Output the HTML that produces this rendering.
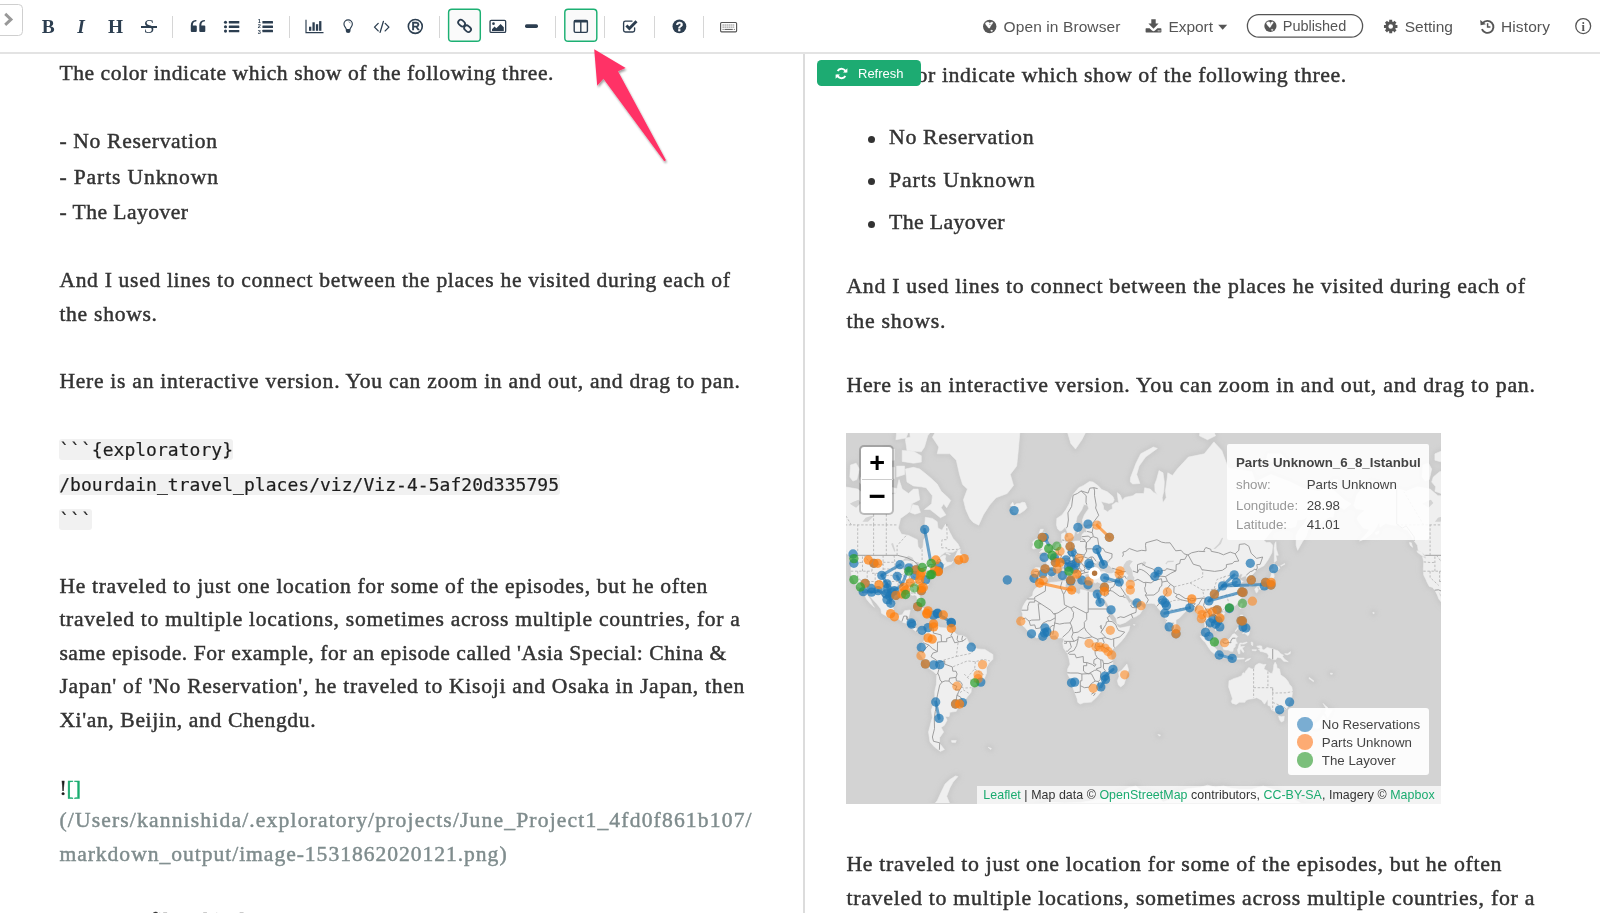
<!DOCTYPE html>
<html lang="en">
<head>
<meta charset="utf-8">
<title>Note editor – split view</title>
<style>
html,body{margin:0;padding:0;}
body{will-change:transform;width:1600px;height:913px;overflow:hidden;background:#fff;position:relative;font-family:"Liberation Sans",sans-serif;color:#333;}
.abs{position:absolute;}
.ic{position:absolute;overflow:visible;}
/* toolbar */
#toolbar{position:absolute;left:0;top:0;width:1600px;height:52px;background:#fff;border-bottom:2px solid #e3e3e3;box-sizing:content-box;}
.tb-letter{position:absolute;font-family:"Liberation Serif",serif;font-weight:bold;font-size:19.4px;line-height:20px;color:#2c3e50;white-space:nowrap;}
.sep{position:absolute;top:16px;height:21.5px;width:0;border-left:1.4px solid #d6d6d6;}
.actbtn{position:absolute;box-sizing:border-box;border:1.8px solid #1cb073;border-radius:4.5px;background:#fafafa;}
.rt{position:absolute;font-size:15px;line-height:18px;color:#555;white-space:nowrap;}
#toggle{position:absolute;left:-6px;top:3.5px;width:28.5px;height:32.5px;box-sizing:border-box;border:1px solid #cfcfcf;border-radius:4.5px;background:#fff;}
/* panes */
#vdiv{position:absolute;left:802.5px;top:54px;width:2.2px;height:859px;background:#dcdcdc;}
.ln{position:absolute;white-space:nowrap;font-family:"Liberation Serif",serif;color:#333;-webkit-text-stroke:0.45px #333;}
.L{font-size:21.6px;line-height:30px;}
.R{font-size:21.85px;line-height:30px;}
.code{position:absolute;white-space:nowrap;font-family:"DejaVu Sans Mono","Liberation Mono",monospace;font-size:18px;line-height:21px;color:#1d1d1d;-webkit-text-stroke:0.2px #1d1d1d;background:#f1f1f1;border-radius:3px;height:20.6px;letter-spacing:0.03px;}
.url{color:#7f8c8d;-webkit-text-stroke:0.45px #7f8c8d;}
.grn{color:#1aab6f;-webkit-text-stroke:0.45px #1aab6f;}
.blk{color:#1a1a1a;}
#refresh{position:absolute;left:817px;top:60px;width:104px;height:25.6px;background:#1dab72;border-radius:4.5px;color:#fff;font-size:13px;line-height:25.6px;}
.bullet{position:absolute;width:7px;height:7px;border-radius:50%;background:#333;}
/* map */
#mapwrap{position:absolute;left:846px;top:433px;width:594.8px;height:370.6px;overflow:hidden;background:#d3d3d3;}
svg.map{position:absolute;left:0;top:0;display:block;}
#zoomctl{position:absolute;left:13px;top:12px;width:35px;height:69.5px;box-sizing:border-box;border:2px solid rgba(0,0,0,0.22);border-radius:5px;background:#fff;background-clip:padding-box;}
#zoomctl div{position:absolute;left:0.7px;width:31px;text-align:center;font-family:"Liberation Sans",sans-serif;font-weight:bold;color:#000;}
#tip{position:absolute;left:381px;top:11px;width:202.3px;height:96px;background:rgba(255,255,255,0.88);border-radius:2px;font-size:13.3px;color:#444;}
#tip div{position:absolute;white-space:nowrap;line-height:16px;}
#legend{position:absolute;left:442.2px;top:274.8px;width:141px;height:67.6px;background:rgba(255,255,255,0.92);border-radius:3px;font-size:13.3px;color:#444;}
#legend i{position:absolute;left:9px;width:15.6px;height:15.6px;border-radius:50%;}
#legend span{position:absolute;left:33.6px;white-space:nowrap;line-height:16px;}
#attr{position:absolute;left:131px;top:353.2px;width:464px;height:17.6px;background:rgba(255,255,255,0.72);font-size:12.4px;line-height:17.5px;color:#333;white-space:nowrap;}
#attr a{color:#1aab6f;text-decoration:none;}
#arrow{position:absolute;left:560px;top:30px;overflow:visible;}
</style>
</head>
<body>

<div id="toolbar">
<div id="toggle"></div>
<svg class="ic" style="left:0;top:0" width="30" height="40" viewBox="0 0 30 40" fill="none" stroke="#999" stroke-width="2.9" stroke-linejoin="miter"><path d="M5.2 13.9 L11 19.4 L5.2 24.9"/></svg>
<div class="tb-letter" id="tB" style="left:41.8px;top:16.7px">B</div>
<div class="tb-letter" id="tI" style="left:77.2px;top:16.7px;font-style:italic">I</div>
<div class="tb-letter" id="tH" style="left:108px;top:16.7px">H</div>
<div class="tb-letter" id="tS" style="left:143.8px;top:16.7px;font-weight:normal">S</div>
<div class="abs" style="left:141.2px;top:26.2px;width:15.8px;height:1.5px;background:#2c3e50"></div>
<div class="sep" style="left:172.3px"></div>
<div class="sep" style="left:289px"></div>
<div class="sep" style="left:438.8px"></div>
<div class="sep" style="left:554.8px"></div>
<div class="sep" style="left:604.4px"></div>
<div class="sep" style="left:653.8px"></div>
<div class="sep" style="left:702.9px"></div>
<svg class="ic" style="left:440px;top:0" width="170" height="52" viewBox="440 0 170 52"><rect x="448.6" y="9.2" width="31.7" height="32" rx="3.3" fill="#fafafa" stroke="#1cb073" stroke-width="1.45"/><rect x="564.8" y="9.2" width="32" height="32" rx="3.3" fill="#fafafa" stroke="#1cb073" stroke-width="1.45"/></svg>
<svg class="ic" style="left:0;top:0" width="800" height="52" viewBox="0 0 800 52" fill="#2c3e50" stroke="none">
<path transform="translate(190.8 19.9)" d="M0 11.2 V5.6 C0 2.2 1.8 0.2 4.9 0 Q5.8 0 5.8 0.85 Q5.8 1.6 4.9 1.7 C3 1.9 2.1 3 2 5.6 H5 Q6 5.6 6 6.6 V11.2 Q6 12.2 5 12.2 H1 Q0 12.2 0 11.2 Z"/>
<path transform="translate(199.3 19.9)" d="M0 11.2 V5.6 C0 2.2 1.8 0.2 4.9 0 Q5.8 0 5.8 0.85 Q5.8 1.6 4.9 1.7 C3 1.9 2.1 3 2 5.6 H5 Q6 5.6 6 6.6 V11.2 Q6 12.2 5 12.2 H1 Q0 12.2 0 11.2 Z"/>
<circle cx="225.5" cy="22.3" r="1.55"/><rect x="228.8" y="21.1" width="10.5" height="2.4" rx="0.5"/>
<circle cx="225.5" cy="26.7" r="1.55"/><rect x="228.8" y="25.5" width="10.5" height="2.4" rx="0.5"/>
<circle cx="225.5" cy="31.1" r="1.55"/><rect x="228.8" y="29.900000000000002" width="10.5" height="2.4" rx="0.5"/>
<rect x="262.4" y="21.05" width="10.6" height="2.5" rx="0.5"/>
<rect x="262.4" y="25.45" width="10.6" height="2.5" rx="0.5"/>
<rect x="262.4" y="29.85" width="10.6" height="2.5" rx="0.5"/>
<g font-family="Liberation Sans, sans-serif" font-weight="bold" font-size="5.6px" text-anchor="middle"><text x="259.2" y="23">1</text><text x="259.2" y="28.3">2</text><text x="259.2" y="33.8">3</text></g>
<path d="M306 19.8 V32.55 H323.5" fill="none" stroke="#2c3e50" stroke-width="1.15"/>
<rect x="309.0" y="26.7" width="2.3" height="4.1"/>
<rect x="312.45" y="22.3" width="2.3" height="8.5"/>
<rect x="315.9" y="24.2" width="2.3" height="6.6"/>
<rect x="319.1" y="21.1" width="2.3" height="9.7"/>
<path d="M346.3 29.2 C346.1 27.6 343.95 26.7 343.95 24.1 A4.2 4.2 0 0 1 352.35 24.1 C352.35 26.7 350.2 27.6 350 29.2" fill="none" stroke="#2c3e50" stroke-width="1.15"/>
<path d="M345.8 28.9 H350.5 V30.9 Q350.5 32.7 348.15 32.95 Q345.8 32.7 345.8 30.9 Z"/>
<path d="M348.6 21.7 Q350 22 350.3 23.3" fill="none" stroke="#2c3e50" stroke-width="0.55"/>
<g fill="none" stroke="#2c3e50" stroke-width="1.35" stroke-linecap="round" stroke-linejoin="round"><path d="M378.2 23.4 L374.5 27.15 L378.2 30.9"/><path d="M383.4 21.4 L380.1 32.4"/><path d="M385.2 23.4 L388.9 27.15 L385.2 30.9"/></g>
<circle cx="415.3" cy="26.4" r="6.95" fill="none" stroke="#2c3e50" stroke-width="1.6"/>
<text x="415.6" y="30.4" font-family="Liberation Sans, sans-serif" font-weight="bold" font-size="11.4px" text-anchor="middle" stroke="#2c3e50" stroke-width="0.3">R</text>
<g fill="none" stroke="#2c3e50" stroke-width="1.75"><rect x="-3.7" y="-2.6" width="7.4" height="5.2" rx="2.6" transform="translate(461.6 23.1) rotate(42)"/><rect x="-3.7" y="-2.6" width="7.4" height="5.2" rx="2.6" transform="translate(467.6 28.7) rotate(42)"/></g>
<rect x="490.05" y="20.4" width="15.6" height="12" rx="1.2" fill="none" stroke="#2c3e50" stroke-width="1.3"/>
<circle cx="493.5" cy="23.7" r="1.35"/><path d="M492 31 V29.2 L494.6 26.6 L496.3 28.3 L500.6 23.9 L503.8 27.2 V31 Z"/>
<rect x="525" y="24.3" width="13" height="3.6" rx="1.6"/>
<rect x="574.2" y="20.5" width="13.2" height="11.9" rx="1.3" fill="none" stroke="#2c3e50" stroke-width="1.4"/><rect x="574" y="19.9" width="13.6" height="2.6" rx="1"/><rect x="580.1" y="21" width="1.4" height="11.5"/>
<path d="M634.6 27.8 V30.2 Q634.6 32 632.8 32 H625.4 Q623.6 32 623.6 30.2 V22.9 Q623.6 21.1 625.4 21.1 H632" fill="none" stroke="#2c3e50" stroke-width="1.35" stroke-linecap="round"/>
<path d="M626.4 25.5 L629.4 28.5 L636.5 21.2" fill="none" stroke="#2c3e50" stroke-width="2.9" stroke-linejoin="miter"/>
<circle cx="679.4" cy="26.45" r="6.9"/>
<text x="679.4" y="30.9" font-family="Liberation Sans, sans-serif" font-weight="bold" font-size="12.3px" text-anchor="middle" fill="#fff" stroke="#fff" stroke-width="0.3">?</text>
<g fill="none" stroke="#555"><rect x="720.6" y="22.5" width="16" height="9.3" rx="1" stroke-width="1.15"/><path d="M722.6 25 H734.8 M722.6 27.1 H734.8" stroke-width="1" stroke-dasharray="1.1 0.9"/><path d="M724.5 29.4 H732.8" stroke-width="1"/><path d="M722.6 29.4 H723.6 M733.8 29.4 H734.8" stroke-width="1"/></g>
</svg>
<svg class="ic" style="left:960px;top:0" width="640" height="52" viewBox="960 0 640 52" fill="#555" stroke="none">
<circle cx="989.7" cy="26.5" r="6.7"/><path d="M985.23 23.25 L986.45 22.13 L988.18 21.93 L989.19 22.54 L989.90 23.25 L990.72 22.44 L992.03 21.93 L992.95 22.54 L992.34 23.86 L991.32 25.08 L990.51 26.30 L989.90 27.72 L989.09 28.33 L988.18 27.72 L987.47 26.70 L986.45 25.59 L985.74 24.47Z M990.72 30.26 L991.93 30.05 L992.85 30.76 L991.93 31.58 L990.92 31.27Z" fill="#fff" stroke="#fff" stroke-width="0.3" stroke-linejoin="round"/><circle cx="989.90" cy="24.17" r="0.51"/>
<path d="M1151.3 19.2 H1155.7 V23.6 H1158.6 L1153.5 28.7 L1148.4 23.6 H1151.3 Z"/>
<path d="M1146.2 28.3 H1149.6 L1152 30.6 Q1153.5 31.8 1155 30.6 L1157.4 28.3 H1160.8 Q1161.4 28.3 1161.4 28.9 V31.8 Q1161.4 32.4 1160.8 32.4 H1146.2 Q1145.6 32.4 1145.6 31.8 V28.9 Q1145.6 28.3 1146.2 28.3 Z"/>
<circle cx="1158.2" cy="30.8" r="0.6" fill="#fff"/><circle cx="1159.9" cy="30.8" r="0.6" fill="#fff"/>
<path d="M1218.2 24.7 H1227.2 L1222.7 29.7 Z"/>
<rect x="1247.4" y="14.6" width="115.2" height="22.6" rx="11.3" fill="none" stroke="#555" stroke-width="1.3"/>
<circle cx="1270.4" cy="26.0" r="6.1"/><path d="M1266.33 23.04 L1267.44 22.03 L1269.01 21.84 L1269.94 22.40 L1270.58 23.04 L1271.32 22.30 L1272.53 21.84 L1273.36 22.40 L1272.80 23.60 L1271.88 24.71 L1271.14 25.82 L1270.58 27.11 L1269.85 27.66 L1269.01 27.11 L1268.37 26.18 L1267.44 25.17 L1266.80 24.15Z M1271.32 29.42 L1272.43 29.23 L1273.27 29.88 L1272.43 30.62 L1271.51 30.34Z" fill="#fff" stroke="#fff" stroke-width="0.3" stroke-linejoin="round"/><circle cx="1270.58" cy="23.87" r="0.46"/>
<path fill-rule="evenodd" d="M1397.43 25.04 L1397.43 28.06 L1395.69 28.00 L1395.26 29.06 L1396.53 30.25 L1394.40 32.38 L1393.21 31.11 L1392.15 31.54 L1392.21 33.28 L1389.19 33.28 L1389.25 31.54 L1388.19 31.11 L1387.00 32.38 L1384.87 30.25 L1386.14 29.06 L1385.71 28.00 L1383.97 28.06 L1383.97 25.04 L1385.71 25.10 L1386.14 24.04 L1384.87 22.85 L1387.00 20.72 L1388.19 21.99 L1389.25 21.56 L1389.19 19.82 L1392.21 19.82 L1392.15 21.56 L1393.21 21.99 L1394.40 20.72 L1396.53 22.85 L1395.26 24.04 L1395.69 25.10Z M1393.00 26.55 A2.3 2.3 0 1 0 1388.40 26.55 A2.3 2.3 0 1 0 1393.00 26.55Z"/>
<path d="M1482.7 23.2 A6 6 0 1 1 1481.9 29.2" fill="none" stroke="#555" stroke-width="1.9"/>
<path d="M1480.2 19.9 L1480.6 25.3 L1485.9 24.2 Z"/>
<path d="M1487.6 23.3 V27 H1490.4" fill="none" stroke="#555" stroke-width="1.5"/>
<circle cx="1583.2" cy="26.1" r="7.45" fill="none" stroke="#555" stroke-width="1.3"/>
<text x="1583.25" y="30.7" font-family="Liberation Serif, serif" font-weight="bold" font-size="12.5px" text-anchor="middle">i</text>
</svg>
<div id="r_open" class="rt" style="left:1003.6px;top:17.73px;font-size:15.5px;letter-spacing:0.096px">Open in Browser</div>
<div id="r_export" class="rt" style="left:1168.4px;top:17.73px;font-size:15.5px;letter-spacing:-0.043px">Export</div>
<div id="r_pub" class="rt" style="left:1282.8px;top:16.98px;font-size:14.5px;letter-spacing:-0.036px">Published</div>
<div id="r_set" class="rt" style="left:1404.7px;top:17.73px;font-size:15.5px;letter-spacing:0.006px">Setting</div>
<div id="r_hist" class="rt" style="left:1501px;top:17.73px;font-size:15.5px;letter-spacing:0.111px">History</div>
</div>
<div id="l1" class="ln L " style="left:59.4px;top:57.71px;letter-spacing:0.565px">The color indicate which show of the following three.</div>
<div id="l2" class="ln L " style="left:59.4px;top:125.71px;letter-spacing:0.671px">- No Reservation</div>
<div id="l3" class="ln L " style="left:59.4px;top:161.71px;letter-spacing:0.874px">- Parts Unknown</div>
<div id="l4" class="ln L " style="left:59.4px;top:197.21px;letter-spacing:0.456px">- The Layover</div>
<div id="l5" class="ln L " style="left:59.4px;top:265.11px;letter-spacing:0.670px">And I used lines to connect between the places he visited during each of</div>
<div id="l6" class="ln L " style="left:59.4px;top:299.11px;letter-spacing:0.712px">the shows.</div>
<div id="l7" class="ln L " style="left:59.4px;top:366.31px;letter-spacing:0.724px">Here is an interactive version. You can zoom in and out, and drag to pan.</div>
<div class="code" style="left:59.2px;top:439.4px;width:174.3px">```{exploratory}</div>
<div class="code" style="left:59.2px;top:474px;width:500.6px">/bourdain_travel_places/viz/Viz-4-5af20d335795</div>
<div class="code" style="left:59.2px;top:509px;width:32.6px">```</div>
<div id="l11" class="ln L " style="left:59.4px;top:570.71px;letter-spacing:0.673px">He traveled to just one location for some of the episodes, but he often</div>
<div id="l12" class="ln L " style="left:59.4px;top:604.11px;letter-spacing:0.722px">traveled to multiple locations, sometimes across multiple countries, for a</div>
<div id="l13" class="ln L " style="left:59.4px;top:637.71px;letter-spacing:0.555px">same episode. For example, for an episode called 'Asia Special: China &amp;</div>
<div id="l14" class="ln L " style="left:59.4px;top:671.11px;letter-spacing:0.730px">Japan' of 'No Reservation', he traveled to Kisoji and Osaka in Japan, then</div>
<div id="l15" class="ln L " style="left:59.4px;top:704.71px;letter-spacing:0.615px">Xi'an, Beijin, and Chengdu.</div>
<div id="l16" class="ln L " style="left:59.4px;top:772.71px;letter-spacing:0.003px"><span class="blk">!</span><span class="grn">[]</span></div>
<div id="l17" class="ln L url" style="left:59.4px;top:805.11px;letter-spacing:1.157px">(/Users/kannishida/.exploratory/projects/June_Project1_4fd0f861b107/</div>
<div id="l18" class="ln L url" style="left:59.4px;top:838.71px;letter-spacing:0.963px">markdown_output/image-1531862020121.png)</div>
<div id="l19" class="ln L " style="left:59.4px;top:905.21px;letter-spacing:0.000px">so we can filter this data.</div>
<div id="vdiv"></div>
<div id="r1" class="ln R " style="left:846.4px;top:59.63px;letter-spacing:0.573px">The color indicate which show of the following three.</div>
<div id="refresh"><svg class="ic" style="left:17.5px;top:6.6px" width="13" height="13" viewBox="0 0 13 13" fill="none" stroke="#fff" stroke-width="1.9"><path d="M10.9 5.2 A4.6 4.6 0 0 0 2.6 3.9"/><path d="M2.1 7.8 A4.6 4.6 0 0 0 10.4 9.1"/><path d="M12.4 1.2 V5.6 H8 Z" fill="#fff" stroke="none"/><path d="M0.6 11.8 V7.4 H5 Z" fill="#fff" stroke="none"/></svg><span id="rf_t" style="position:absolute;left:41px;top:0.8px;letter-spacing:0">Refresh</span></div>
<div class="bullet" style="left:868.1px;top:135.9px"></div>
<div class="bullet" style="left:868.1px;top:178.3px"></div>
<div class="bullet" style="left:868.1px;top:220.7px"></div>
<div id="r2" class="ln R " style="left:889px;top:122.23px;letter-spacing:0.623px">No Reservation</div>
<div id="r3" class="ln R " style="left:889px;top:164.63px;letter-spacing:0.857px">Parts Unknown</div>
<div id="r4" class="ln R " style="left:889px;top:207.03px;letter-spacing:0.340px">The Layover</div>
<div id="r5" class="ln R " style="left:846.4px;top:271.03px;letter-spacing:0.681px">And I used lines to connect between the places he visited during each of</div>
<div id="r6" class="ln R " style="left:846.4px;top:305.63px;letter-spacing:0.752px">the shows.</div>
<div id="r7" class="ln R " style="left:846.4px;top:369.63px;letter-spacing:0.734px">Here is an interactive version. You can zoom in and out, and drag to pan.</div>
<div id="mapwrap">
<svg class="map" viewBox="846 433 595 370" width="595" height="370">
<defs><filter id="halo" x="-5%" y="-5%" width="110%" height="110%"><feGaussianBlur stdDeviation="2.2"/></filter><clipPath id="mc"><rect x="846" y="433" width="595" height="370"/></clipPath></defs>
<rect x="846" y="433" width="595" height="370" fill="#d3d3d3"/>
<g clip-path="url(#mc)">
<defs><path id="landp" d="M781.4 505.8 L784.6 494.4 L790.9 486.8 L799.7 480.6 L810.0 484.5 L824.3 488.6 L833.9 491.3 L845.0 486.8 L857.7 489.1 L865.6 495.7 L876.8 495.7 L886.3 495.7 L895.9 493.5 L899.0 479.6 L902.2 489.1 L908.6 493.5 L913.4 489.1 L918.1 489.1 L919.7 499.8 L911.8 503.8 L910.2 511.4 L900.6 518.4 L898.2 528.1 L901.4 534.1 L908.6 535.5 L917.3 539.7 L918.1 546.5 L920.5 549.6 L922.9 547.8 L923.7 539.7 L926.9 535.5 L924.5 529.6 L925.3 517.3 L932.4 518.4 L937.2 521.7 L938.0 528.1 L942.0 530.2 L945.1 524.9 L945.9 524.0 L949.9 532.6 L953.1 538.4 L957.9 543.8 L959.9 547.8 L956.3 550.3 L953.1 552.3 L945.1 552.3 L942.0 554.5 L937.2 559.6 L943.6 555.3 L945.9 555.8 L945.1 558.9 L946.7 562.3 L951.5 562.3 L953.1 561.2 L951.5 563.9 L946.7 566.2 L943.6 567.9 L943.6 565.7 L945.9 563.5 L942.0 564.6 L937.2 567.5 L935.9 570.1 L937.2 571.8 L934.0 572.9 L930.8 574.1 L930.5 576.4 L928.5 578.5 L927.7 581.5 L928.5 584.8 L925.3 586.8 L922.9 588.7 L919.7 591.5 L919.2 594.9 L921.0 600.3 L921.0 603.3 L919.4 603.5 L917.3 599.4 L916.8 596.3 L914.9 594.9 L912.6 595.4 L909.4 594.3 L906.2 594.5 L906.5 596.5 L903.8 596.1 L899.0 595.6 L895.1 598.0 L893.8 602.1 L893.0 608.2 L895.1 613.3 L898.2 615.5 L902.2 614.8 L904.6 610.7 L910.2 609.9 L909.4 614.1 L908.1 619.1 L913.4 619.3 L916.1 620.8 L915.6 627.3 L917.3 630.0 L921.3 630.2 L925.3 631.0 L924.5 633.3 L921.3 633.3 L919.7 632.1 L916.5 631.7 L912.6 628.9 L909.4 624.1 L903.0 622.4 L898.2 618.8 L894.3 619.5 L887.9 617.0 L881.5 613.3 L880.8 609.0 L876.8 603.8 L872.8 599.4 L869.6 595.8 L866.1 591.7 L867.2 594.9 L870.4 599.4 L872.8 604.7 L874.4 607.3 L870.4 603.8 L866.4 599.0 L864.9 594.9 L862.5 590.2 L860.1 587.4 L856.9 586.4 L854.5 581.9 L853.7 579.9 L851.3 575.0 L850.9 569.0 L851.3 561.9 L850.2 556.7 L853.7 558.9 L852.9 555.3 L849.8 552.8 L845.8 550.3 L845.0 545.2 L841.8 541.1 L838.6 535.5 L835.4 530.2 L830.7 528.7 L825.9 525.6 L819.5 524.9 L813.2 523.3 L807.6 527.1 L806.8 521.7 L803.6 528.1 L798.9 534.1 L792.5 538.9 L786.9 541.1 L792.5 535.5 L797.3 529.6 L790.9 528.1 L786.1 521.7 L784.6 518.4 L786.9 514.9 L792.5 510.3 L789.3 509.5 L783.8 508.8Z M925.3 631.0 L928.5 627.8 L932.4 626.5 L934.8 625.0 L934.8 628.1 L937.2 626.0 L940.4 627.6 L946.7 628.1 L949.9 627.8 L953.1 631.3 L957.9 635.3 L962.6 635.7 L966.6 637.7 L969.0 643.3 L971.4 645.7 L977.7 648.9 L984.9 649.4 L989.7 652.5 L992.9 654.5 L992.9 659.3 L988.9 663.3 L986.5 667.4 L986.5 673.2 L984.1 679.1 L981.7 682.5 L977.0 683.9 L971.4 687.7 L971.1 692.2 L967.4 696.8 L963.4 702.4 L958.7 704.0 L955.8 702.4 L957.9 707.3 L956.3 711.3 L949.9 712.3 L949.1 716.5 L945.1 716.5 L947.1 720.1 L944.4 725.2 L941.2 727.5 L943.6 732.1 L939.6 737.7 L939.6 743.3 L944.4 749.5 L940.4 751.4 L934.8 747.3 L930.0 742.0 L928.5 732.1 L930.8 723.0 L932.4 717.5 L931.3 710.3 L933.2 704.4 L934.8 698.7 L934.8 691.3 L936.4 684.2 L936.7 674.5 L933.2 671.5 L927.7 667.4 L925.3 663.3 L922.1 656.9 L919.4 652.9 L920.8 649.7 L921.3 646.5 L921.3 644.1 L923.2 642.5 L925.3 638.5 L925.6 634.5 L924.5 633.3Z M1039.0 583.9 L1045.3 585.0 L1050.1 582.5 L1056.5 581.9 L1064.4 581.1 L1066.0 581.7 L1065.2 586.4 L1066.0 588.3 L1072.3 590.6 L1078.7 594.3 L1080.3 593.0 L1080.3 589.6 L1085.1 590.2 L1088.2 591.7 L1094.6 593.0 L1097.8 592.1 L1100.2 592.6 L1102.9 592.5 L1104.0 595.8 L1102.9 598.9 L1100.3 595.0 L1101.8 598.5 L1104.2 603.8 L1107.3 609.9 L1107.8 614.1 L1110.5 619.1 L1113.7 622.4 L1116.9 624.9 L1117.3 626.5 L1120.0 628.1 L1126.4 626.8 L1129.9 626.0 L1128.8 630.5 L1124.8 636.9 L1121.6 640.9 L1116.1 646.5 L1112.9 648.9 L1110.5 653.7 L1111.3 657.7 L1112.9 662.5 L1112.9 669.0 L1108.9 672.8 L1104.2 677.4 L1104.9 684.2 L1101.0 686.9 L1100.5 692.2 L1097.0 696.8 L1091.4 702.1 L1083.5 702.8 L1080.3 704.0 L1077.8 702.4 L1077.1 698.7 L1074.7 692.2 L1072.3 686.0 L1071.2 680.8 L1067.6 674.0 L1067.6 669.0 L1070.0 664.1 L1069.2 659.3 L1067.6 653.7 L1063.6 648.1 L1062.8 643.3 L1064.1 639.3 L1062.0 637.7 L1058.0 638.1 L1055.7 635.0 L1050.1 635.7 L1045.3 637.3 L1041.3 636.6 L1036.6 637.9 L1033.4 635.7 L1030.2 633.7 L1027.4 630.5 L1024.7 627.3 L1021.8 624.9 L1020.7 621.3 L1022.3 618.3 L1022.7 614.1 L1021.5 610.7 L1023.1 606.1 L1025.4 602.1 L1027.8 598.9 L1032.6 595.8 L1033.1 592.1 L1035.0 588.7 L1037.7 587.0Z M1039.8 583.5 L1041.3 582.1 L1045.3 581.9 L1047.7 578.9 L1048.5 577.5 L1048.0 576.4 L1050.1 573.3 L1053.6 571.2 L1053.4 568.6 L1055.7 568.2 L1058.8 568.8 L1060.4 567.3 L1062.8 565.9 L1064.9 567.9 L1066.0 570.3 L1068.4 572.3 L1070.8 573.7 L1073.5 575.4 L1073.9 578.5 L1073.5 579.5 L1074.7 579.1 L1075.8 577.5 L1074.7 576.0 L1075.5 574.4 L1077.9 575.4 L1077.1 573.9 L1073.9 571.6 L1072.3 571.2 L1070.0 567.7 L1068.1 566.2 L1068.1 563.9 L1070.3 563.3 L1070.1 564.6 L1072.3 565.7 L1073.9 567.9 L1076.3 569.0 L1078.7 571.2 L1079.5 573.3 L1079.3 574.8 L1081.1 577.5 L1082.2 578.9 L1083.0 581.9 L1084.3 582.5 L1085.1 580.9 L1086.7 580.1 L1085.1 577.5 L1085.1 574.8 L1086.7 574.1 L1089.8 573.7 L1090.2 575.2 L1091.4 574.1 L1094.6 573.3 L1090.2 576.4 L1091.1 578.5 L1091.9 581.5 L1093.3 582.1 L1095.4 583.1 L1097.3 581.9 L1100.2 583.3 L1102.6 582.7 L1105.7 581.9 L1105.4 584.5 L1105.6 586.4 L1104.5 589.3 L1103.7 591.5 L1102.9 592.5 L1104.0 595.8 L1104.2 598.5 L1106.5 602.1 L1108.9 606.4 L1110.5 609.9 L1112.9 614.1 L1116.1 618.3 L1117.2 623.7 L1120.0 624.4 L1125.6 622.4 L1131.2 618.3 L1136.0 616.6 L1139.9 614.1 L1143.6 608.2 L1141.5 606.1 L1138.3 604.7 L1138.0 601.7 L1136.3 603.3 L1134.4 605.2 L1130.5 605.0 L1130.4 602.1 L1129.3 603.8 L1128.0 601.2 L1126.1 598.5 L1124.8 595.2 L1126.1 594.3 L1128.8 595.8 L1130.4 598.9 L1134.4 600.8 L1138.3 600.3 L1139.9 602.6 L1146.3 603.5 L1151.1 603.3 L1154.6 603.8 L1156.6 606.1 L1158.2 608.5 L1160.6 611.1 L1163.0 610.7 L1164.3 614.1 L1165.4 619.1 L1167.4 624.1 L1169.3 628.9 L1171.7 632.0 L1172.8 630.5 L1174.6 628.4 L1176.0 624.1 L1176.0 619.9 L1179.4 618.0 L1183.7 613.6 L1186.8 610.2 L1189.2 609.4 L1192.4 608.5 L1194.5 608.5 L1195.6 611.6 L1198.4 615.0 L1198.8 619.1 L1201.1 618.3 L1203.5 618.3 L1204.6 623.2 L1205.1 628.9 L1204.8 632.1 L1207.8 634.5 L1209.1 640.1 L1213.1 642.8 L1214.2 640.9 L1212.9 637.7 L1211.0 635.0 L1209.1 633.9 L1207.5 629.7 L1207.2 626.5 L1208.3 623.2 L1210.7 624.9 L1212.3 627.3 L1215.1 628.3 L1215.5 631.0 L1218.3 628.3 L1221.8 626.5 L1222.3 623.2 L1221.0 619.1 L1217.8 615.8 L1216.7 613.3 L1218.3 611.1 L1220.2 609.9 L1222.9 609.9 L1223.9 611.9 L1225.0 609.9 L1229.0 608.7 L1230.2 608.3 L1233.7 607.3 L1236.1 604.7 L1238.8 602.1 L1240.9 598.5 L1242.5 594.9 L1241.7 593.0 L1242.2 591.5 L1240.1 588.3 L1238.2 585.4 L1240.1 583.1 L1243.3 581.5 L1240.9 580.1 L1237.7 580.9 L1235.8 577.9 L1237.7 576.8 L1240.9 573.7 L1242.5 574.4 L1241.4 577.5 L1246.0 575.6 L1247.2 579.5 L1249.6 581.5 L1249.3 586.4 L1251.2 586.0 L1254.1 584.8 L1254.4 581.5 L1252.5 578.1 L1251.2 575.8 L1254.7 572.3 L1256.3 570.3 L1258.4 568.6 L1263.9 565.7 L1267.9 560.0 L1271.9 552.8 L1272.7 545.2 L1270.3 542.5 L1266.3 542.5 L1263.9 540.6 L1267.9 535.5 L1272.7 529.6 L1279.0 527.1 L1285.4 526.5 L1290.2 528.1 L1295.7 526.5 L1297.3 520.0 L1302.9 519.4 L1307.7 516.7 L1304.5 523.3 L1298.1 531.1 L1296.1 535.5 L1296.1 545.2 L1297.7 550.3 L1300.5 545.2 L1302.9 541.1 L1306.1 536.4 L1307.7 531.1 L1310.1 525.6 L1314.0 524.0 L1319.6 524.9 L1322.0 521.7 L1329.9 516.7 L1333.1 517.3 L1334.7 507.7 L1337.9 505.8 L1344.2 509.5 L1351.1 503.8 L1344.2 499.8 L1334.7 491.3 L1328.3 487.7 L1318.8 491.3 L1302.9 488.2 L1290.2 482.0 L1271.1 474.4 L1255.2 482.0 L1252.0 471.7 L1228.2 467.9 L1221.8 450.5 L1213.9 441.9 L1204.3 453.8 L1188.4 457.1 L1177.3 469.0 L1172.5 475.5 L1167.8 472.8 L1167.0 479.6 L1165.4 491.3 L1166.2 497.8 L1163.0 502.6 L1162.2 497.8 L1163.8 491.3 L1164.3 482.0 L1163.0 472.8 L1159.0 470.6 L1156.6 479.6 L1154.7 484.5 L1155.0 491.3 L1157.4 494.4 L1153.4 492.2 L1150.3 489.1 L1144.7 487.7 L1143.9 493.5 L1136.0 493.5 L1132.8 495.7 L1124.8 497.4 L1122.4 500.2 L1120.0 494.8 L1117.3 492.7 L1118.1 499.8 L1118.8 503.0 L1116.1 502.3 L1112.1 505.0 L1112.4 508.8 L1108.9 510.6 L1107.8 512.1 L1105.7 510.6 L1103.7 509.5 L1103.4 505.8 L1101.0 501.5 L1104.2 502.3 L1108.9 503.4 L1112.9 502.6 L1114.2 499.8 L1112.9 496.5 L1107.3 491.8 L1101.8 489.6 L1097.8 485.4 L1093.0 482.0 L1089.5 481.5 L1083.5 485.4 L1078.7 487.7 L1073.1 494.4 L1069.2 503.8 L1066.0 509.5 L1062.0 514.9 L1056.8 518.4 L1056.5 524.9 L1057.7 529.0 L1059.9 531.1 L1062.0 530.5 L1065.2 527.1 L1066.3 529.6 L1068.4 535.5 L1068.9 538.6 L1071.2 538.1 L1073.9 536.1 L1074.9 531.7 L1077.9 526.5 L1076.0 521.7 L1077.1 516.7 L1081.9 509.5 L1083.8 504.6 L1087.5 505.0 L1088.7 508.4 L1084.3 514.9 L1082.4 520.0 L1082.7 523.3 L1085.1 525.2 L1088.2 524.3 L1093.0 523.3 L1096.5 525.2 L1093.0 526.5 L1087.5 526.8 L1085.9 529.6 L1087.1 532.6 L1084.3 532.3 L1081.9 534.6 L1081.9 538.9 L1080.0 541.1 L1078.1 540.9 L1074.7 541.1 L1071.1 542.5 L1067.6 541.9 L1065.8 542.5 L1064.4 540.6 L1065.2 536.9 L1065.2 532.3 L1061.5 534.1 L1061.4 538.4 L1062.5 542.5 L1059.6 543.6 L1056.5 544.4 L1055.2 547.8 L1053.7 549.6 L1051.4 550.6 L1050.4 552.8 L1048.8 554.1 L1046.4 553.8 L1046.0 556.0 L1041.0 556.5 L1041.7 558.1 L1044.5 559.3 L1046.6 562.3 L1046.4 565.7 L1045.6 568.2 L1042.1 567.9 L1035.8 567.5 L1033.7 569.0 L1034.5 572.3 L1033.6 577.9 L1034.3 581.5 L1036.7 581.1 L1038.5 582.3Z M762.3 850.1 L794.1 846.4 L810.0 832.7 L833.9 825.4 L857.7 822.5 L881.5 826.6 L889.5 815.4 L905.4 817.0 L921.3 818.1 L929.2 810.2 L937.2 800.7 L941.2 792.0 L945.1 784.0 L949.9 779.5 L955.5 775.9 L957.9 776.6 L953.1 782.1 L949.9 787.9 L946.7 796.3 L951.5 807.8 L951.5 823.7 L969.0 846.4 L992.9 850.1 L1008.8 829.6 L1024.7 815.4 L1035.8 806.8 L1048.5 802.1 L1064.4 803.0 L1080.3 802.5 L1096.2 799.8 L1104.2 798.5 L1112.1 796.3 L1120.0 792.9 L1128.0 787.9 L1136.0 786.0 L1140.7 790.0 L1148.7 792.0 L1156.6 794.1 L1163.0 802.1 L1169.3 799.8 L1175.7 793.3 L1186.8 788.7 L1199.5 787.5 L1207.5 785.2 L1215.5 787.2 L1223.4 786.0 L1231.3 788.3 L1239.3 789.2 L1252.0 789.2 L1263.2 786.0 L1271.1 788.7 L1279.0 791.2 L1287.0 796.3 L1295.0 799.8 L1302.9 804.4 L1310.8 807.8 L1318.8 812.8 L1322.0 836.0 L1334.7 850.1 L1334.7 930.2 L762.3 930.2Z M1039.4 552.6 L1042.9 552.1 L1046.1 551.1 L1050.6 549.8 L1051.2 546.0 L1048.8 545.2 L1048.2 542.5 L1046.1 539.7 L1045.3 536.9 L1044.0 535.8 L1045.3 532.3 L1042.1 532.3 L1043.4 529.3 L1040.5 529.3 L1039.3 532.6 L1039.8 536.9 L1040.9 539.7 L1043.4 540.3 L1043.7 543.0 L1043.4 544.4 L1041.3 544.6 L1041.8 547.0 L1040.2 548.3 L1042.9 549.3 L1043.7 549.8 L1041.7 550.1Z M1038.6 547.3 L1039.0 543.8 L1039.6 540.9 L1038.2 539.2 L1035.3 539.5 L1032.6 541.9 L1033.4 544.6 L1032.1 547.8 L1033.4 549.1 L1035.8 548.3Z M1012.7 511.7 L1016.7 513.2 L1019.9 513.5 L1024.7 510.3 L1026.9 507.7 L1025.0 502.6 L1022.3 502.3 L1019.9 503.4 L1016.4 503.8 L1014.3 505.8 L1012.7 502.3 L1010.3 505.4 L1013.5 506.5 L1010.3 508.4 L1013.5 510.3Z M978.7 525.2 L983.3 514.9 L989.7 505.0 L996.0 497.8 L1007.2 493.5 L1013.5 485.4 L1010.3 474.4 L1016.7 466.1 L1018.3 450.5 L1019.9 431.7 L1029.4 408.1 L1016.7 402.5 L999.2 383.6 L977.0 392.9 L953.1 402.5 L949.9 413.3 L940.4 423.0 L932.4 437.3 L938.8 447.0 L937.2 453.8 L949.9 453.8 L956.3 460.2 L959.5 474.4 L962.6 484.5 L967.4 489.1 L963.4 499.8 L965.8 509.5 L969.8 518.4 L973.0 522.3Z M945.9 514.9 L940.4 517.7 L934.8 513.2 L930.0 509.5 L924.5 509.5 L931.6 503.8 L932.4 495.7 L926.1 487.7 L921.3 486.8 L913.4 485.9 L907.0 482.0 L905.4 469.0 L913.4 467.3 L919.7 469.0 L924.5 472.8 L930.8 478.1 L937.2 484.0 L941.2 491.3 L948.3 497.8 L950.7 500.6 L946.7 507.7 L943.6 503.8 L941.2 507.7Z M862.5 491.3 L868.8 493.5 L881.5 491.3 L887.1 487.7 L882.3 482.0 L881.5 472.8 L876.8 470.6 L867.2 471.7 L860.9 477.0 L859.3 482.0 L863.3 486.8Z M849.8 477.0 L852.9 481.1 L856.9 479.6 L859.3 469.0 L856.1 463.2 L850.5 465.0Z M921.3 462.0 L913.4 463.2 L902.2 461.4 L902.2 450.5 L913.4 451.2 L921.3 455.8Z M921.3 451.8 L907.0 450.5 L905.4 439.7 L910.2 427.4 L902.2 413.3 L913.4 396.6 L937.2 390.3 L949.9 396.6 L946.7 413.3 L937.2 423.0 L927.7 435.8 L924.5 447.0Z M895.9 439.7 L910.2 437.3 L908.6 418.3 L897.5 423.0Z M862.5 460.2 L873.6 463.2 L881.5 460.2 L880.0 451.8 L870.4 450.5 L862.5 453.8Z M883.1 460.2 L894.3 460.2 L894.3 449.1 L884.7 449.1Z M886.3 479.6 L894.3 478.6 L894.3 467.3 L887.1 467.3Z M896.7 477.0 L904.6 474.4 L904.6 466.1 L896.7 466.1Z M910.2 512.4 L914.9 514.2 L920.5 512.4 L918.1 505.8 L912.6 504.6Z M889.5 492.2 L895.9 493.1 L896.7 488.6 L891.1 487.3Z M954.2 558.4 L960.3 560.5 L964.2 560.7 L964.7 558.4 L963.4 555.8 L959.9 553.3 L960.3 549.1 L957.9 550.3 L956.3 554.1Z M945.9 553.1 L949.9 555.0 L950.4 554.5 L947.5 553.1Z M844.5 550.8 L849.0 552.1 L852.1 556.7 L849.8 555.8 L845.3 552.6Z M837.0 542.5 L838.9 542.8 L840.2 547.3 L837.8 545.2Z M913.4 609.2 L916.5 607.3 L920.5 607.1 L926.1 609.7 L930.5 612.1 L925.3 612.6 L924.5 611.2 L922.1 609.7 L918.1 608.3 L914.9 609.4Z M930.2 615.0 L932.0 612.6 L937.2 612.8 L939.7 614.8 L936.4 615.5 L934.5 616.3Z M924.0 615.1 L927.2 615.5 L927.0 616.0 L924.5 616.1Z M941.7 615.0 L944.2 615.1 L943.9 615.9 L941.7 615.9Z M1256.6 587.4 L1259.2 586.8 L1263.2 586.2 L1264.3 588.3 L1266.3 586.2 L1269.0 586.0 L1270.8 585.4 L1272.4 584.1 L1272.7 579.5 L1274.3 576.4 L1273.5 572.5 L1271.6 572.9 L1270.9 576.0 L1269.5 579.5 L1266.3 581.5 L1266.6 580.5 L1264.7 583.5 L1263.9 584.3 L1260.0 584.5 L1256.8 586.4Z M1271.1 572.3 L1272.7 570.1 L1276.3 571.2 L1279.8 568.4 L1279.0 566.4 L1275.9 566.2 L1274.0 563.5 L1273.5 568.4 L1271.6 569.0Z M1255.2 588.3 L1256.8 587.7 L1258.4 589.3 L1257.6 592.1 L1256.3 593.0 L1255.5 591.1 L1254.7 589.3Z M1259.2 587.5 L1262.4 586.8 L1262.0 588.3 L1260.0 589.6 L1259.0 588.7Z M1274.3 562.3 L1276.7 560.5 L1275.9 555.3 L1278.3 555.3 L1276.3 549.1 L1275.9 541.7 L1274.8 543.8 L1274.0 547.8 L1274.3 552.8 L1274.3 557.7Z M1239.6 607.3 L1240.9 603.5 L1242.5 603.8 L1241.4 607.3 L1240.6 609.0Z M1221.3 613.6 L1223.4 612.3 L1225.0 613.1 L1223.4 615.3 L1221.5 614.8Z M1239.8 619.1 L1240.3 615.0 L1242.8 615.1 L1242.8 618.3 L1241.7 620.8 L1242.5 622.4 L1245.7 622.7 L1245.7 624.7 L1243.8 622.9 L1240.9 622.9 L1240.1 621.6 L1239.3 619.9Z M1242.5 633.7 L1244.9 631.2 L1248.0 629.2 L1249.6 632.1 L1248.8 634.9 L1247.7 635.8 L1245.7 634.1 L1244.5 633.1Z M1242.5 626.0 L1244.4 626.3 L1245.7 627.0 L1247.7 625.0 L1248.2 627.3 L1247.2 628.9 L1245.7 628.4 L1244.5 630.0 L1243.3 628.9 L1242.5 628.1Z M1235.0 631.3 L1238.5 626.8 L1238.2 628.4 L1235.6 631.5Z M1221.8 642.5 L1223.4 642.2 L1225.5 640.9 L1228.2 639.8 L1230.6 637.3 L1232.9 634.1 L1235.0 633.7 L1237.7 636.6 L1235.8 638.5 L1236.1 641.2 L1237.4 643.3 L1235.3 644.1 L1235.3 646.5 L1233.4 648.6 L1232.9 651.3 L1230.6 651.3 L1228.2 650.0 L1225.8 650.0 L1223.7 649.4 L1222.6 646.2 L1221.8 644.1Z M1200.0 636.0 L1203.5 636.6 L1207.5 640.1 L1209.9 641.7 L1213.1 644.4 L1214.7 647.8 L1217.0 649.7 L1216.7 654.1 L1214.7 654.1 L1211.2 651.3 L1208.3 647.3 L1205.4 642.5 L1202.7 640.1Z M1215.9 655.6 L1218.3 654.5 L1221.0 655.4 L1225.0 655.3 L1227.7 656.1 L1230.6 657.3 L1230.4 658.6 L1225.0 658.1 L1220.2 657.3 L1217.7 656.7Z M1231.3 658.3 L1237.7 658.1 L1244.1 658.1 L1244.1 658.9 L1237.7 659.3 L1232.1 659.1Z M1244.9 661.4 L1247.2 659.3 L1250.7 658.3 L1248.8 660.1 L1245.7 661.4Z M1238.5 653.7 L1239.9 653.7 L1239.9 649.7 L1240.9 649.2 L1243.0 652.5 L1244.1 651.7 L1242.2 648.1 L1244.5 646.5 L1241.7 646.5 L1240.6 647.1 L1240.1 644.1 L1244.1 644.1 L1247.2 642.5 L1246.9 642.0 L1242.5 643.2 L1240.1 643.0 L1239.0 644.9 L1238.2 648.1 L1237.4 649.7Z M1251.2 642.0 L1252.8 642.5 L1252.8 645.7 L1251.5 644.9Z M1252.0 649.7 L1256.5 649.8 L1256.0 650.8 L1252.3 650.5Z M1256.8 646.2 L1260.0 645.7 L1261.9 646.3 L1261.9 648.9 L1263.9 650.1 L1267.1 647.4 L1272.7 649.0 L1278.3 650.9 L1280.6 653.7 L1283.5 655.3 L1282.2 656.1 L1284.6 659.3 L1288.3 661.7 L1283.8 661.2 L1280.6 658.0 L1277.5 657.2 L1275.9 659.6 L1272.7 659.6 L1269.5 657.7 L1267.9 658.1 L1268.7 655.7 L1267.1 653.2 L1263.2 651.9 L1260.0 651.3 L1259.7 649.7 L1258.4 649.4 L1260.8 648.4 L1257.6 647.3Z M1284.6 653.8 L1287.8 653.7 L1290.5 651.6 L1290.2 653.7 L1287.0 654.9Z M1229.0 680.8 L1230.1 680.4 L1234.2 678.4 L1237.7 677.4 L1241.7 675.7 L1243.0 672.7 L1244.9 673.2 L1245.7 671.2 L1248.8 667.4 L1252.0 669.0 L1254.4 669.0 L1255.2 665.7 L1256.8 664.4 L1259.2 663.3 L1263.2 664.4 L1266.0 664.4 L1264.7 666.6 L1263.9 669.0 L1267.1 670.7 L1270.3 673.2 L1272.4 673.2 L1273.5 669.0 L1273.8 664.9 L1275.1 662.2 L1276.7 664.9 L1277.0 667.9 L1279.5 669.0 L1280.6 674.8 L1283.0 676.5 L1285.4 678.2 L1288.1 681.6 L1289.4 684.2 L1291.8 686.9 L1292.6 691.8 L1291.8 696.8 L1290.2 700.5 L1288.6 703.4 L1287.0 708.3 L1283.8 709.9 L1281.1 712.3 L1278.3 710.7 L1275.9 711.7 L1271.9 710.3 L1270.3 706.3 L1267.9 705.3 L1267.9 700.5 L1267.4 699.8 L1264.7 704.0 L1263.9 703.6 L1261.6 700.2 L1256.8 697.7 L1252.8 698.7 L1248.8 699.2 L1245.7 700.5 L1244.9 702.3 L1239.3 702.3 L1236.1 704.4 L1232.1 703.2 L1231.3 701.5 L1232.5 698.7 L1231.3 694.9 L1229.8 690.4 L1228.6 686.9Z M1278.6 716.1 L1281.4 716.7 L1284.3 716.3 L1283.8 720.8 L1281.4 722.1 L1279.5 719.7Z M1323.1 703.4 L1326.0 706.3 L1327.5 707.3 L1328.3 709.5 L1332.0 709.7 L1330.7 713.0 L1329.9 713.4 L1328.3 716.5 L1327.1 717.5 L1326.4 714.4 L1324.8 713.0 L1326.3 710.3 L1326.0 708.3 L1323.6 704.4Z M1323.1 715.4 L1325.5 718.0 L1323.3 722.3 L1320.7 724.5 L1319.9 727.5 L1316.4 728.8 L1313.2 727.5 L1315.6 723.6 L1319.6 720.8 L1321.2 718.0Z M1309.3 677.5 L1314.0 681.1 L1313.2 681.5 L1308.9 678.4Z M1126.9 664.1 L1128.6 669.9 L1127.2 674.0 L1124.0 684.2 L1120.8 686.9 L1118.5 685.1 L1117.3 680.8 L1119.1 676.5 L1118.5 672.3 L1121.6 670.3 L1124.8 666.6Z M1175.4 629.7 L1177.8 631.3 L1178.6 633.7 L1177.3 635.3 L1175.7 635.3 L1175.4 632.9Z M1066.0 427.4 L1070.8 443.4 L1075.5 449.1 L1081.9 439.7 L1091.4 421.1 L1080.3 418.3Z M1130.4 482.0 L1132.8 484.0 L1139.9 483.5 L1136.7 474.4 L1139.1 466.1 L1145.5 457.1 L1157.4 448.4 L1153.4 447.0 L1140.7 453.8 L1136.0 463.2 L1132.8 471.7 L1130.4 478.1Z M1199.5 435.8 L1207.5 439.7 L1215.5 435.8 L1210.7 423.0 L1201.1 418.3Z M1266.3 460.2 L1274.3 462.0 L1287.0 460.2 L1280.6 453.8 L1267.9 453.8Z M1332.3 482.0 L1337.1 482.5 L1337.9 479.6 L1333.1 479.6Z M1068.2 579.5 L1073.3 578.9 L1072.5 582.1 L1068.5 580.3Z M1061.5 577.5 L1061.7 573.3 L1063.9 573.3 L1063.8 577.0 L1062.7 577.7Z M1062.2 572.3 L1062.3 569.9 L1063.4 569.0 L1063.6 572.0Z M1085.9 584.5 L1090.3 584.8 L1089.8 585.4 L1086.0 585.0Z M1099.9 585.4 L1103.5 584.1 L1102.6 585.6 L1100.5 586.2Z M1052.3 576.2 L1053.9 575.6 L1053.6 576.8Z M1133.2 624.7 L1135.2 624.7 L1134.8 625.2Z M1330.4 673.2 L1332.5 673.3 L1332.2 674.3 L1330.6 674.2Z M951.5 740.5 L956.3 740.5 L955.5 742.5 L951.8 742.3Z M988.1 747.3 L991.3 748.4 L990.9 749.5Z M1157.9 734.5 L1160.6 735.0 L1159.5 736.2Z M1066.0 537.8 L1068.5 536.9 L1068.1 539.7 L1066.3 539.2Z M1077.4 533.5 L1078.7 531.4 L1078.4 533.2Z M1280.6 565.7 L1284.6 563.5 L1284.8 564.2 L1281.0 566.2Z M1353.8 505.8 L1357.0 494.4 L1363.3 486.8 L1372.1 480.6 L1382.4 484.5 L1396.7 488.6 L1406.2 491.3 L1417.4 486.8 L1430.1 489.1 L1438.0 495.7 L1449.2 495.7 L1458.7 495.7 L1468.3 493.5 L1471.4 479.6 L1474.6 489.1 L1481.0 493.5 L1485.8 489.1 L1490.5 489.1 L1492.1 499.8 L1484.2 503.8 L1482.6 511.4 L1473.0 518.4 L1470.6 528.1 L1473.8 534.1 L1481.0 535.5 L1489.7 539.7 L1490.5 546.5 L1492.9 549.6 L1495.3 547.8 L1496.1 539.7 L1499.3 535.5 L1496.9 529.6 L1497.7 517.3 L1504.8 518.4 L1509.6 521.7 L1510.4 528.1 L1514.4 530.2 L1517.5 524.9 L1518.3 524.0 L1522.3 532.6 L1525.5 538.4 L1530.3 543.8 L1532.3 547.8 L1528.7 550.3 L1525.5 552.3 L1517.5 552.3 L1514.4 554.5 L1509.6 559.6 L1516.0 555.3 L1518.3 555.8 L1517.5 558.9 L1519.1 562.3 L1523.9 562.3 L1525.5 561.2 L1523.9 563.9 L1519.1 566.2 L1516.0 567.9 L1516.0 565.7 L1518.3 563.5 L1514.4 564.6 L1509.6 567.5 L1508.3 570.1 L1509.6 571.8 L1506.4 572.9 L1503.2 574.1 L1502.9 576.4 L1500.9 578.5 L1500.1 581.5 L1500.9 584.8 L1497.7 586.8 L1495.3 588.7 L1492.1 591.5 L1491.6 594.9 L1493.4 600.3 L1493.4 603.3 L1491.8 603.5 L1489.7 599.4 L1489.2 596.3 L1487.3 594.9 L1485.0 595.4 L1481.8 594.3 L1478.6 594.5 L1478.9 596.5 L1476.2 596.1 L1471.4 595.6 L1467.5 598.0 L1466.2 602.1 L1465.4 608.2 L1467.5 613.3 L1470.6 615.5 L1474.6 614.8 L1477.0 610.7 L1482.6 609.9 L1481.8 614.1 L1480.5 619.1 L1485.8 619.3 L1488.5 620.8 L1488.0 627.3 L1489.7 630.0 L1493.7 630.2 L1497.7 631.0 L1496.9 633.3 L1493.7 633.3 L1492.1 632.1 L1488.9 631.7 L1485.0 628.9 L1481.8 624.1 L1475.4 622.4 L1470.6 618.8 L1466.7 619.5 L1460.3 617.0 L1453.9 613.3 L1453.2 609.0 L1449.2 603.8 L1445.2 599.4 L1442.0 595.8 L1438.5 591.7 L1439.6 594.9 L1442.8 599.4 L1445.2 604.7 L1446.8 607.3 L1442.8 603.8 L1438.8 599.0 L1437.3 594.9 L1434.9 590.2 L1432.5 587.4 L1429.3 586.4 L1426.9 581.9 L1426.1 579.9 L1423.7 575.0 L1423.3 569.0 L1423.7 561.9 L1422.6 556.7 L1426.1 558.9 L1425.3 555.3 L1422.2 552.8 L1418.2 550.3 L1417.4 545.2 L1414.2 541.1 L1411.0 535.5 L1407.8 530.2 L1403.1 528.7 L1398.3 525.6 L1391.9 524.9 L1385.6 523.3 L1380.0 527.1 L1379.2 521.7 L1376.0 528.1 L1371.3 534.1 L1364.9 538.9 L1359.3 541.1 L1364.9 535.5 L1369.7 529.6 L1363.3 528.1 L1358.5 521.7 L1357.0 518.4 L1359.3 514.9 L1364.9 510.3 L1361.7 509.5 L1356.2 508.8Z M1334.7 850.1 L1366.5 846.4 L1382.4 832.7 L1406.2 825.4 L1430.1 822.5 L1453.9 826.6 L1461.9 815.4 L1477.8 817.0 L1493.7 818.1 L1501.7 810.2 L1509.6 800.7 L1513.6 792.0 L1517.5 784.0 L1522.3 779.5 L1527.9 775.9 L1530.3 776.6 L1525.5 782.1 L1522.3 787.9 L1519.1 796.3 L1523.9 807.8 L1523.9 823.7 L1541.4 846.4 L1565.2 850.1 L1581.2 829.6 L1597.1 815.4 L1608.2 806.8 L1620.9 802.1 L1636.8 803.0 L1652.7 802.5 L1668.6 799.8 L1676.6 798.5 L1684.5 796.3 L1692.4 792.9 L1700.4 787.9 L1708.3 786.0 L1713.1 790.0 L1721.1 792.0 L1729.0 794.1 L1735.4 802.1 L1741.7 799.8 L1748.1 793.3 L1759.2 788.7 L1771.9 787.5 L1779.9 785.2 L1787.8 787.2 L1795.8 786.0 L1803.8 788.3 L1811.7 789.2 L1824.4 789.2 L1835.6 786.0 L1843.5 788.7 L1851.4 791.2 L1859.4 796.3 L1867.3 799.8 L1875.3 804.4 L1883.2 807.8 L1891.2 812.8 L1894.4 836.0 L1907.1 850.1 L1907.1 930.2 L1334.7 930.2Z M1434.9 491.3 L1441.2 493.5 L1453.9 491.3 L1459.5 487.7 L1454.7 482.0 L1453.9 472.8 L1449.2 470.6 L1439.6 471.7 L1433.3 477.0 L1431.7 482.0 L1435.7 486.8Z M1422.2 477.0 L1425.3 481.1 L1429.3 479.6 L1431.7 469.0 L1428.5 463.2 L1422.9 465.0Z M1434.9 460.2 L1446.0 463.2 L1453.9 460.2 L1452.4 451.8 L1442.8 450.5 L1434.9 453.8Z M1416.9 550.8 L1421.4 552.1 L1424.5 556.7 L1422.2 555.8 L1417.7 552.6Z M1409.4 542.5 L1411.3 542.8 L1412.6 547.3 L1410.2 545.2Z M1375.2 532.6 L1378.9 531.1 L1378.4 533.2 L1376.0 534.6Z M1372.9 612.1 L1374.4 612.8 L1373.5 614.1 L1372.9 613.1Z" stroke-linejoin="round"/></defs>
<use href="#landp" fill="#c4c4c4" stroke="#c4c4c4" stroke-width="6" opacity="0.6" filter="url(#halo)"/>
<use href="#landp" fill="#efefef" stroke="#efefef" stroke-width="0.6"/>
<path d="M1093.0 572.7 L1093.0 571.2 L1092.5 569.7 L1094.0 567.9 L1094.3 565.7 L1095.7 564.2 L1097.5 561.2 L1099.4 561.6 L1101.9 562.3 L1100.2 563.7 L1101.8 565.7 L1104.6 564.6 L1106.7 563.9 L1104.2 561.6 L1108.1 560.0 L1110.8 559.6 L1108.9 562.3 L1107.3 563.9 L1109.7 566.2 L1111.6 567.9 L1114.5 570.1 L1114.6 572.0 L1111.6 573.3 L1108.9 573.3 L1106.5 572.7 L1104.2 571.2 L1101.4 571.2 L1098.3 572.9 L1094.9 572.9Z M1126.4 561.2 L1124.0 564.6 L1123.2 566.8 L1124.0 569.0 L1127.2 574.4 L1128.5 574.8 L1126.4 578.5 L1127.2 580.5 L1129.6 581.9 L1134.0 581.9 L1134.4 577.5 L1132.8 575.4 L1132.5 572.3 L1132.0 570.1 L1129.6 565.7 L1130.4 563.9 L1132.8 561.2 L1129.6 560.0Z M1141.5 563.5 L1143.9 561.2 L1146.3 562.3 L1144.7 565.7 L1142.3 566.2Z M902.2 560.7 L905.4 558.1 L908.6 555.8 L912.6 557.7 L914.1 561.0 L910.2 561.2 L907.0 560.5Z M908.9 571.8 L908.7 567.9 L910.2 563.5 L912.9 562.3 L911.4 567.9 L910.5 571.8Z M914.1 562.3 L918.1 562.1 L921.3 564.6 L918.9 565.7 L918.6 568.6 L917.3 568.8 L915.7 566.8 L915.7 563.9Z M915.9 571.8 L918.9 572.3 L923.0 569.5 L921.3 569.5 L917.3 570.5Z M921.6 568.4 L926.1 568.4 L927.3 566.6 L924.5 566.8 L922.4 567.3Z M891.1 543.8 L894.3 551.8 L895.4 551.1 L893.0 543.0Z M862.5 521.7 L868.0 521.7 L874.4 515.6 L870.4 516.3 L865.6 517.7Z M849.8 503.8 L856.1 507.7 L860.9 503.0 L858.5 499.8 L852.9 501.9Z M1213.4 549.1 L1215.5 548.8 L1221.0 543.8 L1223.1 537.8 L1221.8 538.1 L1218.6 543.8Z M1098.9 645.4 L1102.4 644.6 L1102.9 646.8 L1101.0 648.9 L1099.1 648.4Z M1096.5 524.9 L1097.8 520.7 L1100.7 521.4 L1100.7 524.0Z M1165.4 563.5 L1167.8 560.7 L1174.1 560.7 L1173.3 561.9 L1167.8 562.3 L1166.2 564.6Z M1434.9 521.7 L1440.4 521.7 L1446.8 515.6 L1442.8 516.3 L1438.0 517.7Z M1422.2 503.8 L1428.5 507.7 L1433.3 503.0 L1430.9 499.8 L1425.3 501.9Z" fill="#d3d3d3"/>
<path d="M852.9 555.3 L897.5 555.3 L907.0 557.7 L914.1 561.2 L917.3 563.9 L917.5 569.0 L922.9 568.4 L926.9 566.8 L929.7 564.6 L934.8 564.6 L938.5 559.1 L940.7 560.0 L940.7 563.0 L942.0 564.6 M824.3 488.6 L824.3 524.0 L829.9 528.1 L833.9 525.9 L841.8 536.9 L841.8 540.6 M862.3 590.2 L866.1 589.8 L872.0 592.5 L876.5 592.5 L879.2 591.5 L882.3 595.6 L884.7 596.7 L887.1 595.2 L890.3 599.4 L894.0 602.2 M901.9 621.6 L903.8 616.1 L906.7 616.1 L908.1 619.1 M906.7 616.1 L906.7 619.3 L908.1 619.6 M909.1 624.1 L910.6 622.7 L912.2 622.6 L916.2 620.8 M912.2 627.1 L915.4 627.5 M916.7 632.0 L917.2 629.6 M925.6 631.2 L924.8 633.3 M935.1 625.7 L933.2 627.3 L933.4 633.1 L937.2 633.9 L941.2 635.0 L941.5 641.7 L937.5 642.2 L937.4 651.6 L932.4 648.6 L928.8 645.1 L923.2 642.7 M953.1 631.3 L951.0 635.5 L952.0 636.6 L946.7 638.5 L946.7 641.7 L941.5 641.7 M952.0 636.6 L954.7 642.8 L958.7 641.9 L962.6 641.2 L966.3 638.4 M957.7 635.5 L957.1 639.7 L958.7 641.9 M962.6 635.8 L961.8 639.3 L962.6 641.2 M920.8 650.3 L922.9 652.9 L923.7 650.5 L928.8 645.1 M937.4 651.6 L932.7 653.2 L931.0 656.7 L936.4 660.1 L936.2 662.5 L938.0 662.5 L939.3 664.9 L938.8 669.5 L937.8 673.2 L936.7 674.5 M938.0 662.5 L944.7 660.9 L944.7 664.1 L952.3 666.9 L952.8 671.2 L956.0 671.2 L957.1 674.0 L956.0 677.4 L949.6 678.2 L949.0 681.1 L945.1 680.9 L942.0 682.1 L940.1 679.9 L939.3 676.5 L937.8 673.2 M942.0 682.1 L939.7 685.1 L937.5 694.9 L936.4 700.5 L937.2 704.8 L935.3 711.3 L934.3 718.6 L934.5 728.6 L932.4 737.0 L933.5 741.3 L939.7 742.8 L939.4 749.8 M949.0 681.1 L951.5 683.9 L956.8 686.3 L955.3 689.9 L959.5 690.0 L961.7 687.0 L962.2 684.2 L960.1 681.3 L956.4 680.9 L956.0 677.4 M959.5 690.0 L956.9 695.3 L956.0 701.5 M956.9 695.3 L960.3 696.8 L963.6 701.9 M1027.5 599.0 L1034.7 599.0 L1034.7 597.2 L1045.3 591.1 L1045.6 585.4 M1021.5 610.2 L1027.8 610.2 L1027.8 606.4 L1029.4 602.1 L1034.7 602.1 L1034.7 599.8 M1034.7 599.8 L1040.9 603.8 L1050.9 610.4 L1053.7 614.0 L1055.2 614.0 L1055.3 617.8 L1050.1 620.8 L1047.7 620.8 L1042.9 623.2 L1039.8 628.1 L1035.8 628.6 L1034.7 624.9 L1030.4 625.4 L1029.1 621.1 L1025.4 618.1 L1022.3 619.1 M1040.9 603.8 L1038.2 603.8 L1039.8 619.9 L1031.5 620.1 L1029.1 621.1 M1053.7 614.0 L1058.0 612.9 L1067.6 606.4 L1064.4 604.7 L1063.6 594.5 L1061.7 590.2 L1060.4 587.4 L1062.0 581.5 M1063.6 594.5 L1066.8 588.9 M1067.6 606.4 L1071.1 608.0 L1073.9 606.6 L1086.7 613.3 L1086.7 612.4 L1088.2 612.4 L1088.2 591.9 M1088.2 609.0 L1107.2 609.0 M1055.3 617.8 L1055.2 620.6 L1054.2 626.2 L1053.0 625.2 L1050.1 627.3 L1050.4 635.2 M1054.2 626.2 L1052.8 634.7 M1054.2 622.9 L1059.6 624.1 L1064.4 623.2 L1070.1 622.9 L1071.1 624.9 L1071.7 626.5 L1069.2 631.3 L1062.5 637.3 M1071.1 608.0 L1072.3 610.7 L1073.6 612.4 L1073.1 617.6 L1070.1 622.9 M1086.7 613.3 L1086.7 619.6 L1084.3 622.4 L1084.4 627.3 L1086.2 631.0 L1092.1 636.8 L1097.5 639.2 L1102.4 638.2 L1105.6 637.6 M1071.7 626.5 L1073.1 632.9 L1071.6 636.9 L1073.9 641.4 L1069.6 641.4 L1066.5 641.4 L1064.1 641.2 M1073.1 632.9 L1078.1 632.1 L1084.4 627.3 M1073.9 641.4 L1078.1 639.3 L1078.1 636.9 L1084.3 638.4 L1092.1 636.8 M1066.5 641.4 L1066.5 643.3 L1064.1 643.3 M1069.6 641.4 L1071.4 647.3 L1067.3 651.3 L1066.3 651.1 M1078.1 639.3 L1076.6 645.7 L1073.9 650.5 L1069.2 652.2 L1067.9 654.1 M1069.2 654.3 L1074.9 654.3 L1076.3 657.8 L1083.2 656.5 L1083.5 662.5 L1086.7 662.5 L1086.7 665.7 L1083.5 665.7 L1083.5 671.0 L1085.9 673.2 L1088.7 673.7 M1086.7 662.5 L1092.2 664.4 L1094.6 666.4 L1095.9 664.4 L1093.7 663.8 L1094.0 659.8 L1097.5 658.0 M1097.5 650.6 L1094.9 647.3 L1095.7 643.6 L1098.3 641.4 L1097.5 639.2 M1097.5 658.0 L1095.4 654.5 L1094.9 650.5 L1097.5 650.6 M1102.4 646.5 L1108.3 649.8 L1110.8 652.4 M1097.5 646.5 L1102.4 646.5 L1102.4 644.6 L1104.2 642.5 L1102.4 638.2 M1105.6 637.6 L1105.7 637.9 L1111.3 639.5 L1113.7 638.7 L1113.7 646.3 L1114.6 647.6 M1113.7 638.7 L1115.3 638.2 L1119.9 636.9 L1124.7 632.1 L1118.5 630.5 L1116.7 627.3 L1115.9 624.9 L1112.1 621.6 L1108.9 621.3 L1106.5 621.9 L1105.9 624.5 L1102.7 629.7 L1101.0 632.3 L1104.6 636.1 L1105.6 637.6 M1108.9 621.3 L1107.3 617.5 L1109.9 615.8 M1101.0 632.3 L1102.4 629.7 L1100.0 626.2 L1101.3 625.4 L1101.0 628.9 M1097.5 658.0 L1100.8 659.9 L1102.6 660.1 L1103.5 663.5 L1108.1 663.6 L1112.7 661.5 M1100.8 659.9 L1101.0 667.4 L1096.5 668.7 L1096.8 670.0 L1094.6 670.3 L1088.7 673.7 L1091.4 673.8 L1095.2 681.1 L1098.3 681.5 L1100.2 679.6 L1100.8 674.8 L1100.7 671.8 L1096.8 670.0 M1103.5 663.5 L1103.4 668.2 L1105.4 670.7 L1104.3 672.0 M1067.3 672.8 L1070.8 673.0 L1077.9 673.0 L1081.9 674.0 L1088.7 673.7 M1081.9 674.0 L1081.9 680.8 L1080.3 680.8 L1080.3 685.6 L1080.3 692.0 L1076.2 692.6 L1074.7 692.4 M1080.3 685.6 L1084.4 687.7 L1089.0 687.2 L1091.4 683.5 L1095.2 681.1 M1098.3 681.5 L1099.2 687.6 L1099.5 689.2 L1100.8 689.3 M1091.4 694.2 L1094.0 692.6 L1095.2 693.8 L1093.3 695.9 M1034.3 571.4 L1038.2 571.4 L1038.6 572.0 L1037.5 575.4 L1036.6 581.1 M1045.6 568.2 L1049.6 569.7 L1053.6 570.3 M1060.4 567.3 L1059.6 562.6 L1058.2 561.9 L1060.6 558.6 L1061.5 555.3 L1058.7 554.1 L1057.7 554.1 L1055.2 552.8 L1052.5 550.1 M1059.6 562.6 L1062.0 561.9 L1065.2 560.5 L1063.8 558.9 L1060.6 558.6 M1065.2 560.5 L1067.9 560.0 L1070.3 561.2 L1070.1 563.3 M1063.8 558.9 L1069.2 558.9 L1070.4 555.8 L1067.7 552.1 L1071.2 550.3 L1072.3 550.3 L1071.7 546.2 L1071.1 542.8 M1058.7 554.1 L1058.2 550.8 L1058.0 548.3 L1059.8 546.5 L1059.9 544.4 M1058.0 549.6 L1053.9 549.3 M1062.2 540.0 L1064.2 540.3 M1070.3 561.2 L1074.1 560.5 L1075.7 557.7 L1075.4 556.2 L1072.3 555.3 L1070.4 555.8 M1075.4 556.2 L1078.4 554.1 L1084.4 555.0 L1083.6 556.7 L1080.3 557.2 L1077.1 558.1 L1075.7 557.7 M1072.3 550.3 L1075.4 551.8 L1078.4 554.1 M1084.4 555.0 L1086.7 551.1 L1086.0 547.8 L1086.5 542.5 L1084.8 541.4 L1080.0 541.4 M1074.1 560.5 L1074.7 561.2 L1078.4 562.6 L1080.8 561.9 L1083.6 556.7 M1070.1 563.5 L1072.8 563.5 L1074.7 561.2 M1078.4 562.6 L1078.7 564.8 L1073.6 564.2 L1074.3 566.4 L1076.5 569.0 L1077.9 570.1 M1078.7 564.8 L1079.7 566.8 L1079.0 567.9 L1077.9 570.1 L1079.3 571.4 M1080.8 561.9 L1082.7 565.1 L1084.3 565.3 L1084.1 566.8 L1085.1 568.6 L1084.1 570.5 L1081.3 571.2 L1081.1 569.5 L1079.0 567.9 M1081.3 571.2 L1079.3 571.4 L1081.1 573.3 L1081.9 573.7 L1080.3 576.0 M1081.9 573.7 L1085.1 572.7 L1090.3 571.8 L1089.8 573.5 M1084.1 570.5 L1085.1 572.7 M1090.3 571.8 L1093.0 571.2 M1084.3 565.3 L1084.6 566.4 L1089.8 567.5 L1094.0 567.5 M1083.6 556.7 L1088.1 558.4 L1090.8 557.0 L1093.3 563.5 L1095.7 564.2 M1090.8 557.0 L1093.0 557.0 L1096.2 561.4 M1086.7 551.1 L1086.0 548.8 L1091.7 548.8 L1097.2 549.6 L1099.1 547.5 L1103.2 548.5 L1105.1 551.8 L1112.1 553.8 L1111.8 557.9 L1109.2 559.8 M1086.0 547.8 L1086.5 542.5 L1089.5 540.0 L1090.8 537.8 L1093.3 536.7 L1097.6 538.1 L1099.1 547.5 M1093.3 536.7 L1092.5 532.9 L1092.1 532.6 L1093.2 526.8 M1081.9 536.7 L1088.2 536.1 L1090.8 537.8 M1084.8 541.4 L1084.8 540.0 L1082.4 538.9 M1087.1 531.4 L1092.1 532.6 M1093.8 487.7 L1094.6 490.9 L1094.5 495.3 L1096.2 505.0 L1095.6 508.0 L1098.7 515.3 L1092.7 523.3 M1081.1 490.9 L1086.2 495.7 L1086.0 502.3 L1086.8 504.6 M1066.1 528.1 L1067.3 527.1 L1068.4 520.0 L1067.9 512.8 L1071.6 506.5 L1073.1 495.3 L1077.4 493.5 L1081.1 490.9 L1088.1 493.1 L1089.8 488.2 L1093.8 487.7 L1097.6 488.6 M1105.7 581.9 L1106.9 581.9 L1110.2 582.1 L1115.9 581.1 L1119.7 581.1 L1118.5 576.6 L1119.7 576.0 L1117.7 573.1 L1114.5 572.3 M1119.7 576.0 L1122.4 577.7 L1124.8 576.0 L1126.3 578.7 M1117.7 573.1 L1122.4 571.6 L1125.8 571.6 M1112.1 568.2 L1118.1 569.9 L1122.4 571.6 M1105.6 586.2 L1106.7 587.0 L1105.4 588.7 L1105.1 589.8 L1104.2 595.6 M1105.1 589.8 L1110.5 590.6 L1110.2 588.5 L1113.7 586.6 L1115.9 581.1 M1110.5 590.6 L1107.3 592.1 L1108.9 593.9 L1105.7 596.3 L1104.2 596.0 M1110.5 590.6 L1112.7 591.3 L1119.6 596.3 L1122.4 596.5 L1124.3 594.9 M1122.4 596.5 L1125.5 597.6 M1119.7 581.1 L1120.7 583.7 L1121.6 585.2 L1120.8 587.5 L1124.5 593.0 L1125.6 594.9 M1130.5 605.0 L1132.1 607.5 L1136.3 607.8 L1137.1 605.6 L1138.2 604.0 M1131.2 614.1 L1136.0 612.4 L1136.3 607.8 M1117.2 618.1 L1120.4 616.8 L1124.0 617.5 L1131.2 614.1 L1132.9 618.1 M1134.2 580.9 L1137.9 579.3 L1143.9 582.7 L1145.8 582.3 L1145.5 586.2 L1144.7 587.9 L1145.3 592.1 L1146.8 593.0 L1145.3 595.2 L1148.4 599.9 L1146.4 603.5 M1145.8 582.3 L1151.1 582.9 L1154.2 580.7 L1161.4 578.7 L1162.0 582.1 L1167.0 581.1 L1167.6 581.5 M1145.3 595.2 L1153.9 595.0 L1158.7 591.3 L1159.8 587.4 L1161.7 586.0 L1162.0 582.1 M1156.9 606.3 L1160.3 602.1 L1159.2 599.9 L1162.8 598.7 L1167.1 592.8 L1166.2 589.6 L1170.6 584.3 L1167.6 581.5 M1132.8 571.0 L1137.5 572.7 L1139.3 569.2 L1141.7 569.7 L1143.9 570.8 L1146.9 572.9 L1154.2 580.7 M1137.5 572.7 L1137.5 564.6 L1141.7 563.3 L1145.8 566.4 L1153.4 569.2 L1156.9 573.9 L1160.6 573.3 L1161.4 570.5 L1165.4 570.3 L1166.6 568.6 L1176.0 570.8 M1156.9 573.9 L1155.7 577.0 L1160.9 576.2 L1165.5 576.6 L1167.6 581.5 M1122.4 556.7 L1123.4 554.8 L1122.9 552.1 L1125.9 551.3 L1129.3 548.5 L1137.1 551.3 L1141.7 550.3 L1146.1 550.8 L1145.5 545.4 L1145.8 542.8 L1156.9 539.7 L1161.7 542.2 L1165.4 542.8 L1170.1 542.8 L1175.7 550.8 L1181.1 550.3 L1184.1 553.8 L1187.3 554.8 M1176.0 570.8 L1176.2 564.6 L1179.7 563.5 L1180.5 559.6 L1184.8 559.3 L1187.3 554.8 L1188.1 554.8 L1193.2 564.2 L1200.2 566.2 L1201.8 569.7 L1214.7 571.4 L1222.3 570.3 L1226.4 567.5 L1226.4 564.6 L1232.5 563.5 L1234.1 561.6 L1238.8 561.0 L1235.2 553.8 L1233.1 553.1 L1230.2 552.1 L1223.4 554.8 L1218.6 552.8 L1211.2 551.3 L1210.8 549.3 L1205.8 547.5 L1204.0 550.3 L1204.8 551.6 L1198.3 551.3 L1191.6 552.8 L1188.1 554.8 M1176.0 570.8 L1170.8 573.3 L1165.5 576.6 M1170.6 584.3 L1174.1 586.8 L1173.8 592.5 L1177.3 594.5 L1179.0 594.3 L1185.2 598.5 L1188.6 598.7 L1189.7 599.9 L1191.1 598.1 L1194.8 599.0 L1202.7 598.0 L1205.4 599.2 L1203.5 605.6 L1205.9 609.0 L1207.7 611.9 L1209.2 610.4 L1210.8 608.3 L1215.9 606.8 L1218.0 607.5 L1220.2 609.9 M1177.3 594.5 L1175.7 597.0 L1180.9 599.8 L1188.6 601.4 L1188.6 598.7 M1189.7 599.9 L1191.3 600.8 L1194.8 600.5 L1194.8 599.0 M1188.6 601.4 L1188.6 604.0 L1190.0 609.0 L1190.0 603.3 L1195.4 603.8 L1193.5 605.6 L1195.3 607.3 L1195.3 611.2 M1202.7 598.0 L1199.9 602.1 L1198.9 604.4 L1196.8 605.6 L1196.7 608.7 L1195.7 610.2 L1195.3 611.2 M1207.7 611.9 L1204.3 612.8 L1203.4 615.0 L1205.8 618.6 L1204.6 620.6 L1206.2 622.9 L1206.9 626.0 L1205.4 628.6 M1207.7 611.9 L1208.5 613.3 L1209.6 613.3 L1209.1 616.6 L1210.8 615.5 L1213.9 615.3 L1215.1 618.5 L1216.4 619.9 L1216.4 621.6 L1219.4 621.3 L1219.6 620.4 L1218.2 618.3 L1213.7 613.6 L1215.3 611.9 L1210.8 608.3 M1216.4 621.6 L1212.3 622.1 L1211.3 623.1 L1212.1 626.3 M1219.4 621.3 L1219.4 625.2 L1216.7 626.3 L1214.5 628.3 M1207.7 634.7 L1209.2 636.0 L1210.8 635.0 M1222.8 641.7 L1223.4 643.0 L1226.3 643.3 L1228.2 642.5 L1231.0 642.7 L1230.7 641.2 L1232.5 638.2 L1235.5 638.2 M1272.7 649.0 L1272.7 659.4 M1256.2 570.3 L1254.9 569.0 L1252.0 571.2 L1250.3 571.6 L1246.3 575.2 M1250.0 579.9 L1252.7 578.3 M1256.2 570.3 L1257.3 567.9 L1256.8 564.6 L1260.1 564.4 L1262.7 557.0 L1256.6 558.4 L1251.2 553.3 L1248.8 546.2 L1244.9 543.8 L1239.3 544.4 L1238.8 550.3 L1235.2 553.8 M1425.3 555.3 L1469.8 555.3 L1479.4 557.7 L1486.5 561.2 L1489.7 563.9 L1489.9 569.0 L1495.3 568.4 L1499.3 566.8 L1502.1 564.6 L1507.2 564.6 L1510.9 559.1 L1513.1 560.0 L1513.1 563.0 L1514.4 564.6 M1396.7 488.6 L1396.7 524.0 L1402.3 528.1 L1406.2 525.9 L1414.2 536.9 L1414.2 540.6 M1434.7 590.2 L1438.5 589.8 L1444.4 592.5 L1448.9 592.5 L1451.6 591.5 L1454.7 595.6 L1457.1 596.7 L1459.5 595.2 L1462.7 599.4 L1466.4 602.2" fill="none" stroke="#969696" stroke-width="1" stroke-linejoin="round" opacity="0.9"/>
<path d="M1253.6 668.9 L1253.6 698.1 M1253.6 687.7 L1272.7 687.7 L1272.7 710.3 M1267.9 671.5 L1267.9 687.7 M1272.7 687.7 L1272.7 693.1 L1285.4 692.8 L1292.6 691.7 M1272.7 702.4 L1282.2 706.3 L1286.8 709.3 M824.3 524.9 L886.3 524.9 L897.8 524.9 M857.7 555.3 L857.7 524.9 M873.6 555.3 L873.6 524.9 M886.3 555.3 L886.3 524.9 M886.3 524.9 L886.3 496.5 M897.1 555.3 L897.1 545.7 L907.0 534.6 M922.1 560.0 L922.1 549.1 M851.3 524.9 L831.5 491.8 M873.6 524.9 L873.6 486.8 M946.7 524.0 L947.2 539.7 L942.0 539.7 L941.5 547.8 L946.7 547.8 L947.1 549.8 L957.7 549.3 M850.9 571.2 L872.0 571.2 M862.5 571.2 L862.5 555.3 M851.3 561.9 L859.3 562.6 L862.5 562.3 M857.7 571.2 L857.7 577.5 L866.3 585.4 M867.2 571.2 L867.2 583.1 M872.0 571.2 L872.0 564.6 L883.1 564.6 M864.1 555.3 L872.0 565.7 M867.2 581.5 L898.1 581.5 M875.2 573.3 L875.2 592.5 M872.0 573.3 L886.3 573.3 L886.3 575.4 L897.0 575.4 M883.1 555.3 L883.1 573.3 M884.7 581.5 L884.7 591.1 M879.0 591.1 L884.7 591.1 M889.5 582.5 L889.5 586.2 L898.2 588.1 M883.1 569.0 L892.7 569.0 L895.1 570.1 M883.1 562.3 L894.9 562.3 M894.0 555.3 L894.9 562.3 L895.1 570.1 L896.2 574.1 L898.1 577.5 L898.1 589.3 M895.1 567.9 L903.5 567.9 M896.2 574.1 L903.2 574.6 M902.2 560.7 L900.8 564.6 L903.5 567.9 L905.1 571.6 L903.2 574.6 L905.1 577.9 L906.7 581.5 M898.1 582.5 L906.2 582.5 M899.0 589.3 L903.5 589.3 M906.7 581.5 L905.4 585.4 L903.5 589.3 L902.9 593.0 L905.9 593.0 L906.0 594.5 M904.4 570.1 L908.9 570.1 M909.4 571.8 L909.4 579.5 M913.7 571.8 L913.7 577.3 M909.4 571.8 L915.9 571.8 M906.7 581.5 L908.6 579.9 L913.7 577.3 L917.2 578.7 L920.5 574.1 L920.5 571.2 M906.2 582.5 L927.8 582.5 M905.4 585.4 L914.5 585.4 L916.4 585.4 L919.7 585.2 L923.7 587.5 M908.3 585.4 L907.9 594.1 M912.4 585.4 L913.4 591.1 L913.4 593.0 L909.2 593.0 L909.4 594.3 M913.4 593.0 L918.1 593.8 M916.4 585.4 L919.7 591.1 M917.2 578.7 L918.6 581.1 L915.4 582.3 M920.5 576.0 L928.0 576.0 L928.9 578.5 M921.6 570.5 L928.8 571.2 L929.2 572.5 L929.7 572.7 M931.6 564.6 L931.8 569.7 L931.3 573.3 M931.8 569.7 L935.6 569.7 M933.2 564.6 L933.2 569.7 M935.6 563.9 L935.9 568.8 M953.1 666.7 L967.4 660.9 L975.4 661.7 L983.3 659.3 L989.7 660.9 M956.3 656.5 L971.4 653.3 L975.4 646.8 M943.6 660.1 L956.3 656.5 L958.2 641.7 M964.2 674.0 L967.4 677.4 L972.2 681.6 L978.1 682.1 M961.7 687.0 L963.3 688.1 L971.4 687.7 M956.9 695.3 L963.4 689.9 L969.5 693.7 M975.4 661.7 L974.6 669.0 L967.4 677.4 M974.6 669.0 L983.3 674.5 L985.4 674.5 M1204.3 598.5 L1213.9 597.6 L1221.8 596.7 L1226.6 594.9 L1232.9 595.8 L1236.9 592.6 L1240.9 593.0 M1213.9 589.3 L1224.2 586.2 L1232.9 586.4 L1238.0 585.4 M1202.7 590.2 L1209.1 589.6 L1213.9 589.3 L1217.0 579.5 L1225.0 576.4 L1229.8 575.4 L1239.0 575.4 M1174.1 586.8 L1190.0 582.9 L1202.7 577.0 L1202.7 569.7 M1190.0 582.9 L1202.7 590.2 L1204.3 598.5 M1224.2 586.2 L1223.9 576.8 M1226.6 594.9 L1229.0 603.8 L1222.9 609.9 M1229.0 603.8 L1234.5 606.4 M1166.6 609.7 L1176.2 610.2 L1182.1 608.2 L1186.8 609.7 M1166.2 604.5 L1172.8 600.6 L1182.1 599.6 M1171.7 623.2 L1175.7 623.2 M1171.4 631.8 L1171.1 625.7 L1167.1 621.1 L1165.8 619.5 M1396.7 524.9 L1458.7 524.9 L1470.2 524.9 M1430.1 555.3 L1430.1 524.9 M1446.0 555.3 L1446.0 524.9 M1423.7 524.9 L1403.9 491.8 M1446.0 524.9 L1446.0 486.8 M1423.3 571.2 L1444.4 571.2 M1434.9 571.2 L1434.9 555.3 M1423.7 561.9 L1431.7 562.6 L1434.9 562.3 M1430.1 571.2 L1430.1 577.5 L1438.7 585.4 M1439.6 571.2 L1439.6 583.1 M1444.4 571.2 L1444.4 564.6 L1455.5 564.6 M1436.5 555.3 L1444.4 565.7 M1439.6 581.5 L1470.5 581.5 M1444.4 573.3 L1458.7 573.3 L1458.7 575.4 L1469.4 575.4" fill="none" stroke="#a8a8a8" stroke-width="0.85" stroke-dasharray="2.4 1.7" opacity="0.85"/>
<line x1="924.7" y1="529.5" x2="930.3" y2="559.6" stroke="#1f77b4" stroke-width="3" stroke-opacity="0.65" stroke-linecap="round"/>
<line x1="900" y1="564.7" x2="881.8" y2="575.4" stroke="#1f77b4" stroke-width="3" stroke-opacity="0.65" stroke-linecap="round"/>
<line x1="897.2" y1="576.3" x2="901.9" y2="584.7" stroke="#1f77b4" stroke-width="3" stroke-opacity="0.65" stroke-linecap="round"/>
<line x1="908.8" y1="567.9" x2="901.9" y2="584.7" stroke="#1f77b4" stroke-width="3" stroke-opacity="0.65" stroke-linecap="round"/>
<line x1="901.9" y1="584.7" x2="894.4" y2="590.7" stroke="#1f77b4" stroke-width="3" stroke-opacity="0.65" stroke-linecap="round"/>
<line x1="881.8" y1="575.4" x2="887" y2="583.8" stroke="#1f77b4" stroke-width="3" stroke-opacity="0.65" stroke-linecap="round"/>
<line x1="887" y1="583.8" x2="889.8" y2="595.9" stroke="#1f77b4" stroke-width="3" stroke-opacity="0.65" stroke-linecap="round"/>
<line x1="863.2" y1="591.7" x2="871.6" y2="592.1" stroke="#1f77b4" stroke-width="3" stroke-opacity="0.65" stroke-linecap="round"/>
<line x1="871.6" y1="592.1" x2="878.1" y2="590.7" stroke="#1f77b4" stroke-width="3" stroke-opacity="0.65" stroke-linecap="round"/>
<line x1="878.1" y1="590.7" x2="889.8" y2="595.9" stroke="#1f77b4" stroke-width="3" stroke-opacity="0.65" stroke-linecap="round"/>
<line x1="889.8" y1="595.9" x2="890.7" y2="603.3" stroke="#1f77b4" stroke-width="3" stroke-opacity="0.65" stroke-linecap="round"/>
<line x1="935.7" y1="702" x2="939.1" y2="718.4" stroke="#1f77b4" stroke-width="3" stroke-opacity="0.65" stroke-linecap="round"/>
<line x1="937.7" y1="613.2" x2="951.4" y2="622.8" stroke="#1f77b4" stroke-width="3" stroke-opacity="0.65" stroke-linecap="round"/>
<line x1="1044.2" y1="537.3" x2="1048.7" y2="545" stroke="#1f77b4" stroke-width="3" stroke-opacity="0.65" stroke-linecap="round"/>
<line x1="1097" y1="549.5" x2="1103.3" y2="564.3" stroke="#1f77b4" stroke-width="3" stroke-opacity="0.65" stroke-linecap="round"/>
<line x1="1104.7" y1="577.8" x2="1119.2" y2="582" stroke="#1f77b4" stroke-width="3" stroke-opacity="0.65" stroke-linecap="round"/>
<line x1="1097" y1="525.2" x2="1109.4" y2="537.3" stroke="#ff7f0e" stroke-width="3" stroke-opacity="0.65" stroke-linecap="round"/>
<line x1="1039.6" y1="583" x2="1071.7" y2="590" stroke="#ff7f0e" stroke-width="3" stroke-opacity="0.65" stroke-linecap="round"/>
<line x1="1097.3" y1="594.1" x2="1100.1" y2="602.3" stroke="#1f77b4" stroke-width="3" stroke-opacity="0.65" stroke-linecap="round"/>
<line x1="1098" y1="553" x2="1103.5" y2="564" stroke="#1f77b4" stroke-width="3" stroke-opacity="0.65" stroke-linecap="round"/>
<line x1="1158.3" y1="571.5" x2="1154.8" y2="576.3" stroke="#1f77b4" stroke-width="3" stroke-opacity="0.65" stroke-linecap="round"/>
<line x1="1164.8" y1="613.2" x2="1189.7" y2="607.8" stroke="#1f77b4" stroke-width="3" stroke-opacity="0.65" stroke-linecap="round"/>
<line x1="1208.9" y1="600.9" x2="1222.6" y2="585.9" stroke="#1f77b4" stroke-width="3" stroke-opacity="0.65" stroke-linecap="round"/>
<line x1="1222.6" y1="585.9" x2="1234.2" y2="574.9" stroke="#1f77b4" stroke-width="3" stroke-opacity="0.65" stroke-linecap="round"/>
<line x1="1222.6" y1="585.9" x2="1236.3" y2="582.4" stroke="#1f77b4" stroke-width="3" stroke-opacity="0.65" stroke-linecap="round"/>
<line x1="1208.9" y1="600.9" x2="1241.8" y2="592" stroke="#1f77b4" stroke-width="3" stroke-opacity="0.65" stroke-linecap="round"/>
<line x1="1222.6" y1="585.9" x2="1264.3" y2="584.5" stroke="#1f77b4" stroke-width="3" stroke-opacity="0.65" stroke-linecap="round"/>
<line x1="1219.2" y1="655" x2="1232.2" y2="658.4" stroke="#1f77b4" stroke-width="3" stroke-opacity="0.65" stroke-linecap="round"/>
<line x1="1113" y1="669.4" x2="1104.9" y2="676.2" stroke="#1f77b4" stroke-width="3" stroke-opacity="0.65" stroke-linecap="round"/>
<line x1="1105.5" y1="679.4" x2="1100.8" y2="686.9" stroke="#1f77b4" stroke-width="3" stroke-opacity="0.65" stroke-linecap="round"/>
<line x1="1072.1" y1="552.2" x2="1076" y2="563" stroke="#1f77b4" stroke-width="3" stroke-opacity="0.65" stroke-linecap="round"/>
<line x1="1054.5" y1="557.8" x2="1066" y2="563" stroke="#1f77b4" stroke-width="3" stroke-opacity="0.65" stroke-linecap="round"/>
<circle cx="924.7" cy="529.5" r="4.65" fill="#1f77b4" fill-opacity="0.72"/>
<circle cx="1014.1" cy="510.6" r="4.65" fill="#1f77b4" fill-opacity="0.72"/>
<circle cx="853" cy="554" r="4.65" fill="#1f77b4" fill-opacity="0.72"/>
<circle cx="853.9" cy="563.3" r="4.65" fill="#1f77b4" fill-opacity="0.72"/>
<circle cx="900" cy="564.7" r="4.65" fill="#1f77b4" fill-opacity="0.72"/>
<circle cx="881.8" cy="575.4" r="4.65" fill="#1f77b4" fill-opacity="0.72"/>
<circle cx="897.2" cy="576.3" r="4.65" fill="#1f77b4" fill-opacity="0.72"/>
<circle cx="908.8" cy="567.9" r="4.65" fill="#1f77b4" fill-opacity="0.72"/>
<circle cx="887" cy="583.8" r="4.65" fill="#1f77b4" fill-opacity="0.72"/>
<circle cx="887" cy="588.4" r="4.65" fill="#1f77b4" fill-opacity="0.72"/>
<circle cx="871.1" cy="588.4" r="4.65" fill="#1f77b4" fill-opacity="0.72"/>
<circle cx="878.1" cy="590.7" r="4.65" fill="#1f77b4" fill-opacity="0.72"/>
<circle cx="863.2" cy="591.7" r="4.65" fill="#1f77b4" fill-opacity="0.72"/>
<circle cx="871.6" cy="592.1" r="4.65" fill="#1f77b4" fill-opacity="0.72"/>
<circle cx="889.8" cy="595.9" r="4.65" fill="#1f77b4" fill-opacity="0.72"/>
<circle cx="887" cy="599.6" r="4.65" fill="#1f77b4" fill-opacity="0.72"/>
<circle cx="890.7" cy="603.3" r="4.65" fill="#1f77b4" fill-opacity="0.72"/>
<circle cx="892" cy="592" r="4.65" fill="#1f77b4" fill-opacity="0.72"/>
<circle cx="886" cy="594" r="4.65" fill="#1f77b4" fill-opacity="0.72"/>
<circle cx="894.4" cy="590.7" r="4.65" fill="#1f77b4" fill-opacity="0.72"/>
<circle cx="914.9" cy="575.4" r="4.65" fill="#1f77b4" fill-opacity="0.72"/>
<circle cx="939.1" cy="566.1" r="4.65" fill="#1f77b4" fill-opacity="0.72"/>
<circle cx="925.6" cy="580" r="4.65" fill="#1f77b4" fill-opacity="0.72"/>
<circle cx="937.2" cy="613.6" r="4.65" fill="#1f77b4" fill-opacity="0.72"/>
<circle cx="933.5" cy="615.4" r="4.65" fill="#1f77b4" fill-opacity="0.72"/>
<circle cx="911.2" cy="622.9" r="4.65" fill="#1f77b4" fill-opacity="0.72"/>
<circle cx="951.2" cy="622.4" r="4.65" fill="#1f77b4" fill-opacity="0.72"/>
<circle cx="911.7" cy="624.2" r="4.65" fill="#1f77b4" fill-opacity="0.72"/>
<circle cx="922" cy="630.3" r="4.65" fill="#1f77b4" fill-opacity="0.72"/>
<circle cx="928.1" cy="627.6" r="4.65" fill="#1f77b4" fill-opacity="0.72"/>
<circle cx="937.7" cy="613.2" r="4.65" fill="#1f77b4" fill-opacity="0.72"/>
<circle cx="951.4" cy="622.8" r="4.65" fill="#1f77b4" fill-opacity="0.72"/>
<circle cx="921.3" cy="647.5" r="4.65" fill="#1f77b4" fill-opacity="0.72"/>
<circle cx="971.3" cy="647.2" r="4.65" fill="#1f77b4" fill-opacity="0.72"/>
<circle cx="933.6" cy="665" r="4.65" fill="#1f77b4" fill-opacity="0.72"/>
<circle cx="939.8" cy="664.6" r="4.65" fill="#1f77b4" fill-opacity="0.72"/>
<circle cx="935.7" cy="702" r="4.65" fill="#1f77b4" fill-opacity="0.72"/>
<circle cx="939.1" cy="718.4" r="4.65" fill="#1f77b4" fill-opacity="0.72"/>
<circle cx="980.8" cy="682.1" r="4.65" fill="#1f77b4" fill-opacity="0.72"/>
<circle cx="962.4" cy="702.6" r="4.65" fill="#1f77b4" fill-opacity="0.72"/>
<circle cx="1007.3" cy="580" r="4.65" fill="#1f77b4" fill-opacity="0.72"/>
<circle cx="1031.5" cy="633.8" r="4.65" fill="#1f77b4" fill-opacity="0.72"/>
<circle cx="1047" cy="632" r="4.65" fill="#1f77b4" fill-opacity="0.72"/>
<circle cx="1045" cy="628" r="4.65" fill="#1f77b4" fill-opacity="0.72"/>
<circle cx="1042.8" cy="636.3" r="4.65" fill="#1f77b4" fill-opacity="0.72"/>
<circle cx="1044.5" cy="633" r="4.65" fill="#1f77b4" fill-opacity="0.72"/>
<circle cx="1077.9" cy="527.3" r="4.65" fill="#1f77b4" fill-opacity="0.72"/>
<circle cx="1088" cy="524.1" r="4.65" fill="#1f77b4" fill-opacity="0.72"/>
<circle cx="1097" cy="549.5" r="4.65" fill="#1f77b4" fill-opacity="0.72"/>
<circle cx="1103.3" cy="564.3" r="4.65" fill="#1f77b4" fill-opacity="0.72"/>
<circle cx="1044.2" cy="557.4" r="4.65" fill="#1f77b4" fill-opacity="0.72"/>
<circle cx="1072.1" cy="552.2" r="4.65" fill="#1f77b4" fill-opacity="0.72"/>
<circle cx="1071.2" cy="565.3" r="4.65" fill="#1f77b4" fill-opacity="0.72"/>
<circle cx="1068.4" cy="567.1" r="4.65" fill="#1f77b4" fill-opacity="0.72"/>
<circle cx="1074" cy="569" r="4.65" fill="#1f77b4" fill-opacity="0.72"/>
<circle cx="1051.7" cy="571.8" r="4.65" fill="#1f77b4" fill-opacity="0.72"/>
<circle cx="1034" cy="578.3" r="4.65" fill="#1f77b4" fill-opacity="0.72"/>
<circle cx="1042.8" cy="573.7" r="4.65" fill="#1f77b4" fill-opacity="0.72"/>
<circle cx="1062.4" cy="575.5" r="4.65" fill="#1f77b4" fill-opacity="0.72"/>
<circle cx="1088.9" cy="563.4" r="4.65" fill="#1f77b4" fill-opacity="0.72"/>
<circle cx="1089.8" cy="565.7" r="4.65" fill="#1f77b4" fill-opacity="0.72"/>
<circle cx="1081.9" cy="580.2" r="4.65" fill="#1f77b4" fill-opacity="0.72"/>
<circle cx="1088" cy="584.8" r="4.65" fill="#1f77b4" fill-opacity="0.72"/>
<circle cx="1070.7" cy="581.1" r="4.65" fill="#1f77b4" fill-opacity="0.72"/>
<circle cx="1104.7" cy="577.8" r="4.65" fill="#1f77b4" fill-opacity="0.72"/>
<circle cx="1119.2" cy="582" r="4.65" fill="#1f77b4" fill-opacity="0.72"/>
<circle cx="1097.3" cy="594.1" r="4.65" fill="#1f77b4" fill-opacity="0.72"/>
<circle cx="1044.2" cy="537.3" r="4.65" fill="#1f77b4" fill-opacity="0.72"/>
<circle cx="1054.5" cy="557.8" r="4.65" fill="#1f77b4" fill-opacity="0.72"/>
<circle cx="1066" cy="560" r="4.65" fill="#1f77b4" fill-opacity="0.72"/>
<circle cx="1076" cy="563" r="4.65" fill="#1f77b4" fill-opacity="0.72"/>
<circle cx="1100.1" cy="602.3" r="4.65" fill="#1f77b4" fill-opacity="0.72"/>
<circle cx="1111" cy="609.8" r="4.65" fill="#1f77b4" fill-opacity="0.72"/>
<circle cx="1137" cy="603" r="4.65" fill="#1f77b4" fill-opacity="0.72"/>
<circle cx="1158.3" cy="571.5" r="4.65" fill="#1f77b4" fill-opacity="0.72"/>
<circle cx="1154.8" cy="576.3" r="4.65" fill="#1f77b4" fill-opacity="0.72"/>
<circle cx="1162.4" cy="600.2" r="4.65" fill="#1f77b4" fill-opacity="0.72"/>
<circle cx="1165.1" cy="603" r="4.65" fill="#1f77b4" fill-opacity="0.72"/>
<circle cx="1166.5" cy="605.7" r="4.65" fill="#1f77b4" fill-opacity="0.72"/>
<circle cx="1164.8" cy="613.2" r="4.65" fill="#1f77b4" fill-opacity="0.72"/>
<circle cx="1189.7" cy="607.8" r="4.65" fill="#1f77b4" fill-opacity="0.72"/>
<circle cx="1169.2" cy="626.9" r="4.65" fill="#1f77b4" fill-opacity="0.72"/>
<circle cx="1208.9" cy="600.9" r="4.65" fill="#1f77b4" fill-opacity="0.72"/>
<circle cx="1222.6" cy="585.9" r="4.65" fill="#1f77b4" fill-opacity="0.72"/>
<circle cx="1234.2" cy="574.9" r="4.65" fill="#1f77b4" fill-opacity="0.72"/>
<circle cx="1236.3" cy="582.4" r="4.65" fill="#1f77b4" fill-opacity="0.72"/>
<circle cx="1215.7" cy="624.2" r="4.65" fill="#1f77b4" fill-opacity="0.72"/>
<circle cx="1210.3" cy="622.8" r="4.65" fill="#1f77b4" fill-opacity="0.72"/>
<circle cx="1219.8" cy="626.9" r="4.65" fill="#1f77b4" fill-opacity="0.72"/>
<circle cx="1213" cy="618.7" r="4.65" fill="#1f77b4" fill-opacity="0.72"/>
<circle cx="1218" cy="621" r="4.65" fill="#1f77b4" fill-opacity="0.72"/>
<circle cx="1205.5" cy="632.4" r="4.65" fill="#1f77b4" fill-opacity="0.72"/>
<circle cx="1208.9" cy="636.5" r="4.65" fill="#1f77b4" fill-opacity="0.72"/>
<circle cx="1219.2" cy="655" r="4.65" fill="#1f77b4" fill-opacity="0.72"/>
<circle cx="1232.2" cy="658.4" r="4.65" fill="#1f77b4" fill-opacity="0.72"/>
<circle cx="1243" cy="627" r="4.65" fill="#1f77b4" fill-opacity="0.72"/>
<circle cx="1113" cy="669.4" r="4.65" fill="#1f77b4" fill-opacity="0.72"/>
<circle cx="1104.9" cy="676.2" r="4.65" fill="#1f77b4" fill-opacity="0.72"/>
<circle cx="1229.4" cy="608.5" r="4.65" fill="#1f77b4" fill-opacity="0.72"/>
<circle cx="1250.3" cy="563.3" r="4.65" fill="#1f77b4" fill-opacity="0.72"/>
<circle cx="1273.6" cy="568.7" r="4.65" fill="#1f77b4" fill-opacity="0.72"/>
<circle cx="1264.3" cy="585.9" r="4.65" fill="#1f77b4" fill-opacity="0.72"/>
<circle cx="1245.8" cy="628" r="4.65" fill="#1f77b4" fill-opacity="0.72"/>
<circle cx="1074.7" cy="682.1" r="4.65" fill="#1f77b4" fill-opacity="0.72"/>
<circle cx="1071.5" cy="682.8" r="4.65" fill="#1f77b4" fill-opacity="0.72"/>
<circle cx="1100.8" cy="686.9" r="4.65" fill="#1f77b4" fill-opacity="0.72"/>
<circle cx="1105.5" cy="679.4" r="4.65" fill="#1f77b4" fill-opacity="0.72"/>
<circle cx="1289.6" cy="702" r="4.65" fill="#1f77b4" fill-opacity="0.72"/>
<circle cx="1279.6" cy="709.8" r="4.65" fill="#1f77b4" fill-opacity="0.72"/>
<circle cx="865.1" cy="583.3" r="4.65" fill="#1f77b4" fill-opacity="0.7"/>
<circle cx="865.1" cy="583.3" r="4.65" fill="#ff7f0e" fill-opacity="0.65"/>
<circle cx="873.9" cy="563.3" r="4.65" fill="#1f77b4" fill-opacity="0.7"/>
<circle cx="873.9" cy="563.3" r="4.65" fill="#ff7f0e" fill-opacity="0.65"/>
<circle cx="915.8" cy="569.8" r="4.65" fill="#1f77b4" fill-opacity="0.7"/>
<circle cx="915.8" cy="569.8" r="4.65" fill="#ff7f0e" fill-opacity="0.65"/>
<circle cx="895.8" cy="595.4" r="4.65" fill="#1f77b4" fill-opacity="0.7"/>
<circle cx="895.8" cy="595.4" r="4.65" fill="#ff7f0e" fill-opacity="0.65"/>
<circle cx="917.7" cy="606.6" r="4.65" fill="#1f77b4" fill-opacity="0.7"/>
<circle cx="917.7" cy="606.6" r="4.65" fill="#ff7f0e" fill-opacity="0.65"/>
<circle cx="921.4" cy="590.7" r="4.65" fill="#1f77b4" fill-opacity="0.7"/>
<circle cx="921.4" cy="590.7" r="4.65" fill="#ff7f0e" fill-opacity="0.65"/>
<circle cx="938.2" cy="571.2" r="4.65" fill="#1f77b4" fill-opacity="0.7"/>
<circle cx="938.2" cy="571.2" r="4.65" fill="#ff7f0e" fill-opacity="0.65"/>
<circle cx="925.4" cy="663.9" r="4.65" fill="#1f77b4" fill-opacity="0.7"/>
<circle cx="925.4" cy="663.9" r="4.65" fill="#ff7f0e" fill-opacity="0.65"/>
<circle cx="955.5" cy="704" r="4.65" fill="#1f77b4" fill-opacity="0.7"/>
<circle cx="955.5" cy="704" r="4.65" fill="#ff7f0e" fill-opacity="0.65"/>
<circle cx="1109.4" cy="537.3" r="4.65" fill="#1f77b4" fill-opacity="0.7"/>
<circle cx="1109.4" cy="537.3" r="4.65" fill="#ff7f0e" fill-opacity="0.65"/>
<circle cx="1042.3" cy="537.3" r="4.65" fill="#1f77b4" fill-opacity="0.7"/>
<circle cx="1042.3" cy="537.3" r="4.65" fill="#ff7f0e" fill-opacity="0.65"/>
<circle cx="1070.1" cy="546.5" r="4.65" fill="#1f77b4" fill-opacity="0.7"/>
<circle cx="1070.1" cy="546.5" r="4.65" fill="#ff7f0e" fill-opacity="0.65"/>
<circle cx="1045.1" cy="568.8" r="4.65" fill="#1f77b4" fill-opacity="0.7"/>
<circle cx="1045.1" cy="568.8" r="4.65" fill="#ff7f0e" fill-opacity="0.65"/>
<circle cx="1070.7" cy="580.2" r="4.65" fill="#1f77b4" fill-opacity="0.7"/>
<circle cx="1070.7" cy="580.2" r="4.65" fill="#ff7f0e" fill-opacity="0.65"/>
<circle cx="1104.5" cy="587.2" r="4.65" fill="#1f77b4" fill-opacity="0.7"/>
<circle cx="1104.5" cy="587.2" r="4.65" fill="#ff7f0e" fill-opacity="0.65"/>
<circle cx="1055.4" cy="562.5" r="4.65" fill="#1f77b4" fill-opacity="0.7"/>
<circle cx="1055.4" cy="562.5" r="4.65" fill="#ff7f0e" fill-opacity="0.65"/>
<circle cx="1176" cy="633.8" r="4.65" fill="#1f77b4" fill-opacity="0.7"/>
<circle cx="1176" cy="633.8" r="4.65" fill="#ff7f0e" fill-opacity="0.65"/>
<circle cx="1217.1" cy="609.8" r="4.65" fill="#1f77b4" fill-opacity="0.7"/>
<circle cx="1217.1" cy="609.8" r="4.65" fill="#ff7f0e" fill-opacity="0.65"/>
<circle cx="1241.8" cy="592" r="4.65" fill="#1f77b4" fill-opacity="0.7"/>
<circle cx="1241.8" cy="592" r="4.65" fill="#ff7f0e" fill-opacity="0.65"/>
<circle cx="1241.1" cy="620.8" r="4.65" fill="#1f77b4" fill-opacity="0.7"/>
<circle cx="1241.1" cy="620.8" r="4.65" fill="#ff7f0e" fill-opacity="0.65"/>
<circle cx="1214.4" cy="594.1" r="4.65" fill="#1f77b4" fill-opacity="0.7"/>
<circle cx="1214.4" cy="594.1" r="4.65" fill="#ff7f0e" fill-opacity="0.65"/>
<circle cx="1251.3" cy="580" r="4.65" fill="#1f77b4" fill-opacity="0.7"/>
<circle cx="1251.3" cy="580" r="4.65" fill="#ff7f0e" fill-opacity="0.65"/>
<circle cx="1265.6" cy="582.4" r="4.65" fill="#1f77b4" fill-opacity="0.7"/>
<circle cx="1265.6" cy="582.4" r="4.65" fill="#ff7f0e" fill-opacity="0.65"/>
<circle cx="1271" cy="585" r="4.65" fill="#1f77b4" fill-opacity="0.7"/>
<circle cx="1271" cy="585" r="4.65" fill="#ff7f0e" fill-opacity="0.65"/>
<circle cx="1243" cy="592.4" r="4.65" fill="#1f77b4" fill-opacity="0.7"/>
<circle cx="1243" cy="592.4" r="4.65" fill="#ff7f0e" fill-opacity="0.65"/>
<circle cx="1242.4" cy="621" r="4.65" fill="#1f77b4" fill-opacity="0.7"/>
<circle cx="1242.4" cy="621" r="4.65" fill="#ff7f0e" fill-opacity="0.65"/>
<circle cx="868.3" cy="560" r="4.65" fill="#ff7f0e" fill-opacity="0.72"/>
<circle cx="877.7" cy="563.3" r="4.65" fill="#ff7f0e" fill-opacity="0.72"/>
<circle cx="879" cy="584.7" r="4.65" fill="#ff7f0e" fill-opacity="0.72"/>
<circle cx="935.8" cy="560" r="4.65" fill="#ff7f0e" fill-opacity="0.72"/>
<circle cx="958.7" cy="560" r="4.65" fill="#ff7f0e" fill-opacity="0.72"/>
<circle cx="964.2" cy="558.6" r="4.65" fill="#ff7f0e" fill-opacity="0.72"/>
<circle cx="920.5" cy="575.4" r="4.65" fill="#ff7f0e" fill-opacity="0.72"/>
<circle cx="919.6" cy="580" r="4.65" fill="#ff7f0e" fill-opacity="0.72"/>
<circle cx="921.4" cy="572.6" r="4.65" fill="#ff7f0e" fill-opacity="0.72"/>
<circle cx="934.5" cy="569.8" r="4.65" fill="#ff7f0e" fill-opacity="0.72"/>
<circle cx="938.2" cy="571.7" r="4.65" fill="#ff7f0e" fill-opacity="0.72"/>
<circle cx="910.2" cy="582.8" r="4.65" fill="#ff7f0e" fill-opacity="0.72"/>
<circle cx="903.7" cy="587.5" r="4.65" fill="#ff7f0e" fill-opacity="0.72"/>
<circle cx="905.6" cy="590.3" r="4.65" fill="#ff7f0e" fill-opacity="0.72"/>
<circle cx="901.9" cy="594" r="4.65" fill="#ff7f0e" fill-opacity="0.72"/>
<circle cx="921.4" cy="588.4" r="4.65" fill="#ff7f0e" fill-opacity="0.72"/>
<circle cx="923.3" cy="587.5" r="4.65" fill="#ff7f0e" fill-opacity="0.72"/>
<circle cx="890.7" cy="613.6" r="4.65" fill="#ff7f0e" fill-opacity="0.72"/>
<circle cx="894.4" cy="616.8" r="4.65" fill="#ff7f0e" fill-opacity="0.72"/>
<circle cx="927" cy="614" r="4.65" fill="#ff7f0e" fill-opacity="0.72"/>
<circle cx="928" cy="610.8" r="4.65" fill="#ff7f0e" fill-opacity="0.72"/>
<circle cx="943.3" cy="615" r="4.65" fill="#ff7f0e" fill-opacity="0.72"/>
<circle cx="933.5" cy="623.8" r="4.65" fill="#ff7f0e" fill-opacity="0.72"/>
<circle cx="926.8" cy="613.2" r="4.65" fill="#ff7f0e" fill-opacity="0.72"/>
<circle cx="933.6" cy="626.9" r="4.65" fill="#ff7f0e" fill-opacity="0.72"/>
<circle cx="951.4" cy="628.3" r="4.65" fill="#ff7f0e" fill-opacity="0.72"/>
<circle cx="928.1" cy="637.9" r="4.65" fill="#ff7f0e" fill-opacity="0.72"/>
<circle cx="932.2" cy="639.2" r="4.65" fill="#ff7f0e" fill-opacity="0.72"/>
<circle cx="959.6" cy="704" r="4.65" fill="#ff7f0e" fill-opacity="0.72"/>
<circle cx="921" cy="655.7" r="4.65" fill="#ff7f0e" fill-opacity="0.55"/>
<circle cx="982.5" cy="664.6" r="4.65" fill="#ff7f0e" fill-opacity="0.55"/>
<circle cx="978.1" cy="674.8" r="4.65" fill="#ff7f0e" fill-opacity="0.55"/>
<circle cx="956.9" cy="686.2" r="4.65" fill="#ff7f0e" fill-opacity="0.55"/>
<circle cx="978.1" cy="678.7" r="4.65" fill="#ff7f0e" fill-opacity="0.55"/>
<circle cx="1020.8" cy="621.2" r="4.65" fill="#ff7f0e" fill-opacity="0.55"/>
<circle cx="1054.2" cy="635.1" r="4.65" fill="#ff7f0e" fill-opacity="0.55"/>
<circle cx="1060" cy="562.5" r="4.65" fill="#ff7f0e" fill-opacity="0.72"/>
<circle cx="1076.8" cy="574.1" r="4.65" fill="#ff7f0e" fill-opacity="0.72"/>
<circle cx="1039.6" cy="583" r="4.65" fill="#ff7f0e" fill-opacity="0.72"/>
<circle cx="1071.7" cy="590" r="4.65" fill="#ff7f0e" fill-opacity="0.72"/>
<circle cx="1104.3" cy="591.3" r="4.65" fill="#ff7f0e" fill-opacity="0.72"/>
<circle cx="1097" cy="525.2" r="4.65" fill="#ff7f0e" fill-opacity="0.55"/>
<circle cx="1069.1" cy="537.3" r="4.65" fill="#ff7f0e" fill-opacity="0.55"/>
<circle cx="1060" cy="551.3" r="4.65" fill="#ff7f0e" fill-opacity="0.55"/>
<circle cx="1079.1" cy="558.6" r="4.65" fill="#ff7f0e" fill-opacity="0.55"/>
<circle cx="1035.4" cy="573.2" r="4.65" fill="#ff7f0e" fill-opacity="0.55"/>
<circle cx="1043.3" cy="580.2" r="4.65" fill="#ff7f0e" fill-opacity="0.55"/>
<circle cx="1088.9" cy="581.1" r="4.65" fill="#ff7f0e" fill-opacity="0.55"/>
<circle cx="1120.1" cy="570.9" r="4.65" fill="#ff7f0e" fill-opacity="0.55"/>
<circle cx="1119.2" cy="574.1" r="4.65" fill="#ff7f0e" fill-opacity="0.55"/>
<circle cx="1130.3" cy="584.4" r="4.65" fill="#ff7f0e" fill-opacity="0.55"/>
<circle cx="1130.3" cy="590" r="4.65" fill="#ff7f0e" fill-opacity="0.55"/>
<circle cx="1057.2" cy="569" r="4.65" fill="#ff7f0e" fill-opacity="0.55"/>
<circle cx="1191.8" cy="598.9" r="4.65" fill="#ff7f0e" fill-opacity="0.72"/>
<circle cx="1219.9" cy="618" r="4.65" fill="#ff7f0e" fill-opacity="0.72"/>
<circle cx="1141.1" cy="605.7" r="4.65" fill="#ff7f0e" fill-opacity="0.55"/>
<circle cx="1167.4" cy="592" r="4.65" fill="#ff7f0e" fill-opacity="0.55"/>
<circle cx="1199.3" cy="609.8" r="4.65" fill="#ff7f0e" fill-opacity="0.55"/>
<circle cx="1202" cy="614.6" r="4.65" fill="#ff7f0e" fill-opacity="0.55"/>
<circle cx="1201.4" cy="618.7" r="4.65" fill="#ff7f0e" fill-opacity="0.55"/>
<circle cx="1207.5" cy="613.2" r="4.65" fill="#ff7f0e" fill-opacity="0.55"/>
<circle cx="1212.3" cy="611.9" r="4.65" fill="#ff7f0e" fill-opacity="0.55"/>
<circle cx="1110.3" cy="630.3" r="4.65" fill="#ff7f0e" fill-opacity="0.55"/>
<circle cx="1089.1" cy="643.3" r="4.65" fill="#ff7f0e" fill-opacity="0.55"/>
<circle cx="1096" cy="646.8" r="4.65" fill="#ff7f0e" fill-opacity="0.55"/>
<circle cx="1104.9" cy="648.1" r="4.65" fill="#ff7f0e" fill-opacity="0.55"/>
<circle cx="1111.7" cy="655" r="4.65" fill="#ff7f0e" fill-opacity="0.55"/>
<circle cx="1100" cy="647" r="4.65" fill="#ff7f0e" fill-opacity="0.55"/>
<circle cx="1108" cy="651.5" r="4.65" fill="#ff7f0e" fill-opacity="0.55"/>
<circle cx="1176" cy="629" r="4.65" fill="#ff7f0e" fill-opacity="0.55"/>
<circle cx="1224.6" cy="642.7" r="4.65" fill="#ff7f0e" fill-opacity="0.55"/>
<circle cx="1124.7" cy="674.8" r="4.65" fill="#ff7f0e" fill-opacity="0.55"/>
<circle cx="1271.1" cy="582.4" r="4.65" fill="#ff7f0e" fill-opacity="0.72"/>
<circle cx="1252.4" cy="601.2" r="4.65" fill="#ff7f0e" fill-opacity="0.55"/>
<circle cx="1093.2" cy="688.3" r="4.65" fill="#ff7f0e" fill-opacity="0.55"/>
<circle cx="853.9" cy="558.6" r="4.65" fill="#2ca02c" fill-opacity="0.72"/>
<circle cx="853.9" cy="579.6" r="4.65" fill="#2ca02c" fill-opacity="0.72"/>
<circle cx="860.4" cy="587" r="4.65" fill="#2ca02c" fill-opacity="0.72"/>
<circle cx="908.8" cy="571.2" r="4.65" fill="#2ca02c" fill-opacity="0.72"/>
<circle cx="922.3" cy="567.5" r="4.65" fill="#2ca02c" fill-opacity="0.72"/>
<circle cx="931.2" cy="563.3" r="4.65" fill="#2ca02c" fill-opacity="0.72"/>
<circle cx="930.3" cy="574.9" r="4.65" fill="#2ca02c" fill-opacity="0.72"/>
<circle cx="931.7" cy="574.4" r="4.65" fill="#2ca02c" fill-opacity="0.72"/>
<circle cx="905.6" cy="594.5" r="4.65" fill="#2ca02c" fill-opacity="0.72"/>
<circle cx="921" cy="602.4" r="4.65" fill="#2ca02c" fill-opacity="0.72"/>
<circle cx="914.4" cy="588" r="4.65" fill="#2ca02c" fill-opacity="0.55"/>
<circle cx="974.7" cy="682.8" r="4.65" fill="#2ca02c" fill-opacity="0.72"/>
<circle cx="1038.6" cy="544.1" r="4.65" fill="#2ca02c" fill-opacity="0.72"/>
<circle cx="1048.7" cy="548.5" r="4.65" fill="#2ca02c" fill-opacity="0.72"/>
<circle cx="1052.1" cy="555.5" r="4.65" fill="#2ca02c" fill-opacity="0.72"/>
<circle cx="1068.9" cy="571.1" r="4.65" fill="#2ca02c" fill-opacity="0.72"/>
<circle cx="1056.8" cy="546.2" r="4.65" fill="#2ca02c" fill-opacity="0.55"/>
<circle cx="1229.4" cy="607.8" r="4.65" fill="#2ca02c" fill-opacity="0.72"/>
<circle cx="1214.4" cy="642" r="4.65" fill="#2ca02c" fill-opacity="0.72"/>
<circle cx="1242.4" cy="603.4" r="4.65" fill="#2ca02c" fill-opacity="0.55"/>
<circle cx="1094.6" cy="573.3" r="6.2" fill="#fff"/><circle cx="1094.6" cy="573.3" r="2.7" fill="#b5763d"/>
</g></svg>
<div id="zoomctl"><div style="top:0;height:32px;border-bottom:1px solid #ccc;font-size:27px;line-height:32.2px">+</div><div style="top:35.2px;height:30px;font-size:29.5px;line-height:28px">&#8722;</div></div>
<div id="tip"><div style="left:9px;top:10.6px;font-weight:bold;color:#444;letter-spacing:0" id="tip_t">Parts Unknown_6_8_Istanbul</div><div style="left:9px;top:33.2px;color:#999">show:</div><div style="left:79.7px;top:33.2px">Parts Unknown</div><div style="left:9px;top:53.6px;color:#999">Longitude:</div><div style="left:79.7px;top:53.6px">28.98</div><div style="left:9px;top:73.4px;color:#999">Latitude:</div><div style="left:79.7px;top:73.4px">41.01</div></div>
<div id="legend"><i style="top:9.0px;background:#7aadd2"></i><span style="top:8.8px">No Reservations</span><i style="top:26.5px;background:#fdab73"></i><span style="top:27.0px">Parts Unknown</span><i style="top:44.3px;background:#7bbf7b"></i><span style="top:45.1px">The Layover</span></div>
<div id="attr"><span id="attr_t" style="position:absolute;left:6.3px;top:0.9px;letter-spacing:0.053px"><a>Leaflet</a> | Map data &copy; <a>OpenStreetMap</a> contributors, <a>CC-BY-SA</a>, Imagery &copy; <a>Mapbox</a></span></div>
</div>
<div id="r8" class="ln R " style="left:846.4px;top:849.13px;letter-spacing:0.675px">He traveled to just one location for some of the episodes, but he often</div>
<div id="r9" class="ln R " style="left:846.4px;top:882.63px;letter-spacing:0.725px">traveled to multiple locations, sometimes across multiple countries, for a</div>
<svg id="arrow" width="130" height="150" viewBox="560 30 130 150"><defs><filter id="ash" x="-20%" y="-20%" width="150%" height="150%"><feGaussianBlur in="SourceAlpha" stdDeviation="1.3"/><feOffset dx="1" dy="1.6"/><feComponentTransfer><feFuncA type="linear" slope="0.38"/></feComponentTransfer><feMerge><feMergeNode/><feMergeNode in="SourceGraphic"/></feMerge></filter></defs><path filter="url(#ash)" fill="#ff3366" d="M594.2 49.3 L625.7 68 L618 71.2 L666 160.2 L664.2 161.2 L603.4 78.8 L597.2 85.8 Z"/></svg>
</body></html>
